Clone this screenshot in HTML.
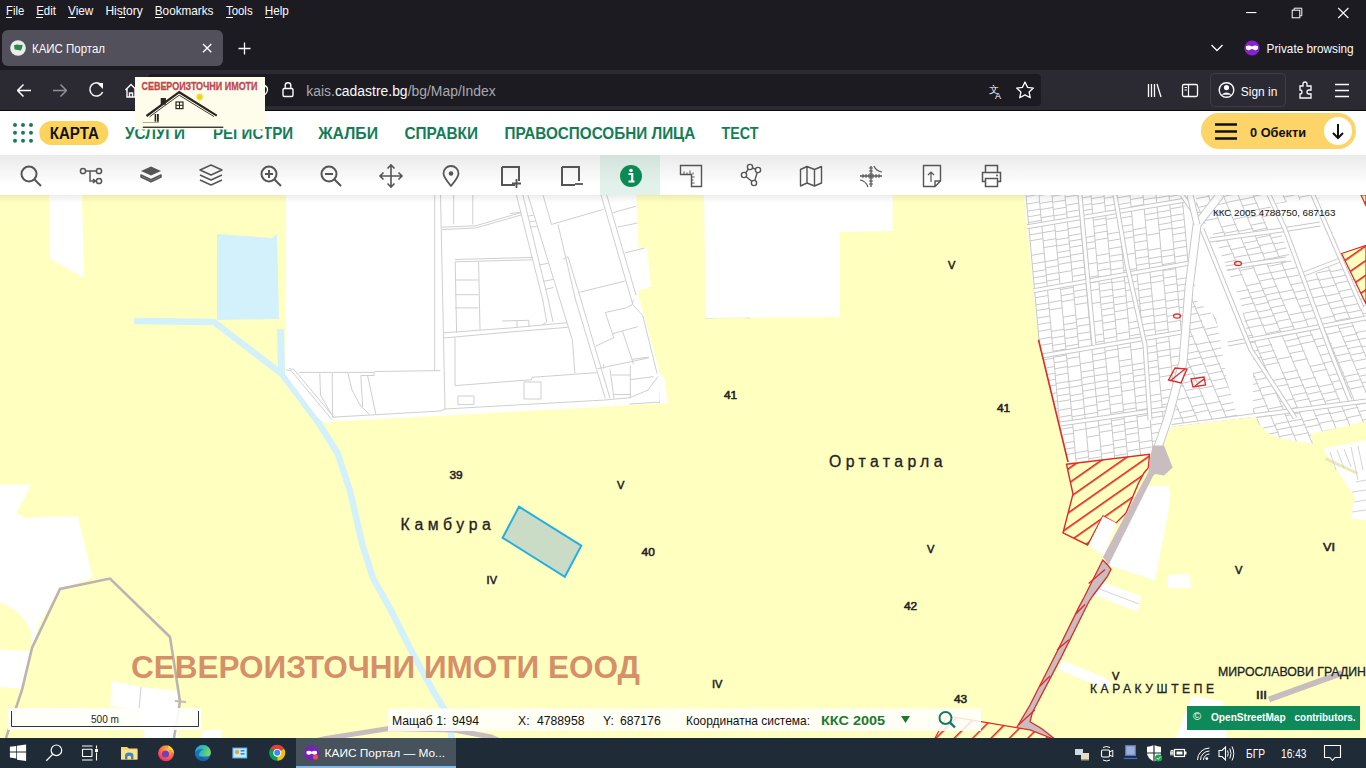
<!DOCTYPE html>
<html><head><meta charset="utf-8">
<style>
*{margin:0;padding:0}
html,body{width:1366px;height:768px;overflow:hidden;background:#fff}
svg{display:block;font-family:"Liberation Sans",sans-serif}
</style></head><body>
<svg width="1366" height="768" viewBox="0 0 1366 768" font-family="Liberation Sans, sans-serif">
<rect x="0" y="0" width="1366" height="70" fill="#1c1b22"/>
<text x="6.1" y="15.4" font-size="12.8" font-weight="normal" fill="#fbfbfe" textLength="18.1" lengthAdjust="spacingAndGlyphs" >File</text>
<text x="36.2" y="15.4" font-size="12.8" font-weight="normal" fill="#fbfbfe" textLength="19.8" lengthAdjust="spacingAndGlyphs" >Edit</text>
<text x="68" y="15.4" font-size="12.8" font-weight="normal" fill="#fbfbfe" textLength="25.3" lengthAdjust="spacingAndGlyphs" >View</text>
<text x="105.4" y="15.4" font-size="12.8" font-weight="normal" fill="#fbfbfe" textLength="37.4" lengthAdjust="spacingAndGlyphs" >History</text>
<text x="154.8" y="15.4" font-size="12.8" font-weight="normal" fill="#fbfbfe" textLength="58.7" lengthAdjust="spacingAndGlyphs" >Bookmarks</text>
<text x="226" y="15.4" font-size="12.8" font-weight="normal" fill="#fbfbfe" textLength="26.6" lengthAdjust="spacingAndGlyphs" >Tools</text>
<text x="264.7" y="15.4" font-size="12.8" font-weight="normal" fill="#fbfbfe" textLength="24.1" lengthAdjust="spacingAndGlyphs" >Help</text>
<rect x="6" y="17" width="6" height="1" fill="#fbfbfe"/>
<rect x="36" y="17" width="7" height="1" fill="#fbfbfe"/>
<rect x="68" y="17" width="8" height="1" fill="#fbfbfe"/>
<rect x="119" y="17" width="6" height="1" fill="#fbfbfe"/>
<rect x="155" y="17" width="8" height="1" fill="#fbfbfe"/>
<rect x="226" y="17" width="7" height="1" fill="#fbfbfe"/>
<rect x="265" y="17" width="8" height="1" fill="#fbfbfe"/>
<rect x="1246" y="12" width="10.4" height="1.1" fill="#fbfbfe"/>
<rect x="1292.2" y="10.2" width="7.6" height="7.6" fill="none" stroke="#fbfbfe" stroke-width="1"/>
<path d="M1294.2 10.2 V8.2 H1301.8 V15.8 H1299.8" fill="none" stroke="#fbfbfe" stroke-width="1"/>
<path d="M1338.2 8 L1348.4 18 M1348.4 8 L1338.2 18" stroke="#fbfbfe" stroke-width="1.1"/>
<rect x="2" y="30" width="221" height="36" rx="6" fill="#52515b"/>
<circle cx="18" cy="48" r="7.8" fill="#ececec"/>
<path d="M14 45.2 L17 44.6 L20 45 L22.6 44.8 L22.2 47.6 L21 50.4 L17.5 50 L14.6 49.5 Z" fill="#2c8a48"/>
<text x="32" y="52.7" font-size="12.3" font-weight="normal" fill="#fbfbfe" textLength="73" lengthAdjust="spacingAndGlyphs" >КАИС Портал</text>
<path d="M203 43.9 L211.3 52.2 M211.3 43.9 L203 52.2" stroke="#fbfbfe" stroke-width="1.4"/>
<path d="M244.5 42.5 V54.5 M238.5 48.5 H250.5" stroke="#fbfbfe" stroke-width="1.3"/>
<path d="M1211.5 45 L1217 50.5 L1222.5 45" fill="none" stroke="#fbfbfe" stroke-width="1.3"/>
<circle cx="1252" cy="48" r="7.6" fill="#8a1fd0"/>
<path d="M1246 46.2 Q1249 44.6 1252 46.6 Q1255 44.6 1258 46.2 Q1258.6 50.4 1255.2 50.2 Q1253 49.6 1252 48.8 Q1251 49.6 1248.8 50.2 Q1245.4 50.4 1246 46.2Z" fill="#fff"/>
<text x="1266.6" y="52.8" font-size="12.3" font-weight="normal" fill="#fbfbfe" textLength="87" lengthAdjust="spacingAndGlyphs" >Private browsing</text>
<rect x="0" y="70" width="1366" height="40" fill="#2b2a33"/>
<rect x="0" y="110" width="1366" height="1" fill="#0c0c0d"/>
<rect x="148" y="74" width="893" height="32" rx="4" fill="#1c1b22"/>
<path d="M17 90.5 H31 M17.5 90.5 L23.5 84.5 M17.5 90.5 L23.5 96.5" fill="none" stroke="#fbfbfe" stroke-width="1.5"/>
<path d="M53 90.5 H67 M66.5 90.5 L60.5 84.5 M66.5 90.5 L60.5 96.5" fill="none" stroke="#8f8f9d" stroke-width="1.5"/>
<path d="M101.6 85.2 A6.6 6.6 0 1 0 102.6 92" fill="none" stroke="#fbfbfe" stroke-width="1.5"/>
<path d="M96.8 83 L103 83 L103 89 Z" fill="#fbfbfe"/>
<path d="M125.5 90 L131 84.5 L136.5 90 M127 89 V97 H135 V89 M129.5 97 V93 H132.5 V97" fill="none" stroke="#fbfbfe" stroke-width="1.4"/>
<rect x="283" y="88.5" width="10" height="8" rx="1.5" fill="none" stroke="#fbfbfe" stroke-width="1.4"/>
<path d="M285.2 88.5 V85.5 A2.8 2.8 0 0 1 290.8 85.5 V88.5" fill="none" stroke="#fbfbfe" stroke-width="1.4"/>
<text x="306.3" y="96.2" font-size="14" fill="#a9a9b0" textLength="189.5" lengthAdjust="spacingAndGlyphs">kais.<tspan fill="#fbfbfe">cadastre.bg</tspan>/bg/Map/Index</text>
<text x="988.5" y="93" font-size="10" font-weight="normal" fill="#fbfbfe" >文</text>
<text x="995" y="98.5" font-size="9" font-weight="normal" fill="#fbfbfe" >A</text>
<path d="M1025 82 L1027.6 87.4 L1033.4 88.1 L1029.1 92 L1030.3 97.8 L1025 94.9 L1019.7 97.8 L1020.9 92 L1016.6 88.1 L1022.4 87.4 Z" fill="none" stroke="#fbfbfe" stroke-width="1.3" stroke-linejoin="round"/>
<path d="M1148.5 84 V97 M1151.5 84 V97 M1154.5 84 V97 M1157 84 L1161 97" fill="none" stroke="#fbfbfe" stroke-width="1.3"/>
<rect x="1182.5" y="84.5" width="15" height="12" rx="1.5" fill="none" stroke="#fbfbfe" stroke-width="1.3"/><path d="M1188.5 84.5 V96.5 M1184.5 87.5 H1187 M1184.5 90 H1187" stroke="#fbfbfe" stroke-width="1.2"/>
<rect x="1210.5" y="73.5" width="75" height="33" rx="4" fill="none" stroke="#3f3e48" stroke-width="1"/>
<circle cx="1226.5" cy="90" r="7.3" fill="none" stroke="#fbfbfe" stroke-width="1.4"/><circle cx="1226.5" cy="87.6" r="2.6" fill="#fbfbfe"/><path d="M1221.5 94.8 Q1226.5 90 1231.5 94.8" fill="#fbfbfe"/>
<text x="1240.8" y="95.7" font-size="13.6" font-weight="normal" fill="#fbfbfe" textLength="36.6" lengthAdjust="spacingAndGlyphs" >Sign in</text>
<path d="M1300 86 H1303 V84 A2 2 0 0 1 1307 84 V86 H1311 V90 H1309 A2 2 0 0 0 1309 94 H1311 V98 H1300 V94 A2 2 0 0 0 1300 90 Z" fill="none" stroke="#fbfbfe" stroke-width="1.3"/>
<path d="M1335 84.5 H1349 M1335 90.5 H1349 M1335 96.5 H1349" stroke="#fbfbfe" stroke-width="1.4"/>
<rect x="0" y="111" width="1366" height="44" fill="#fff"/>
<circle cx="15" cy="125" r="2" fill="#1f7a5a"/>
<circle cx="15" cy="132.8" r="2" fill="#1f7a5a"/>
<circle cx="15" cy="140.7" r="2" fill="#1f7a5a"/>
<circle cx="23" cy="125" r="2" fill="#1f7a5a"/>
<circle cx="23" cy="132.8" r="2" fill="#1f7a5a"/>
<circle cx="23" cy="140.7" r="2" fill="#1f7a5a"/>
<circle cx="31" cy="125" r="2" fill="#1f7a5a"/>
<circle cx="31" cy="132.8" r="2" fill="#1f7a5a"/>
<circle cx="31" cy="140.7" r="2" fill="#1f7a5a"/>
<rect x="39.3" y="121" width="69" height="24" rx="12" fill="#fbd35d"/>
<text x="49.7" y="138.8" font-size="15.8" font-weight="bold" fill="#111" textLength="49.2" lengthAdjust="spacingAndGlyphs" >КАРТА</text>
<text x="125" y="139.2" font-size="16.4" font-weight="bold" fill="#137d57" textLength="60" lengthAdjust="spacingAndGlyphs" >УСЛУГИ</text>
<text x="213" y="139.2" font-size="16.4" font-weight="bold" fill="#137d57" textLength="80" lengthAdjust="spacingAndGlyphs" >РЕГИСТРИ</text>
<text x="318.3" y="139.2" font-size="16.4" font-weight="bold" fill="#137d57" textLength="59.7" lengthAdjust="spacingAndGlyphs" >ЖАЛБИ</text>
<text x="404.4" y="139.2" font-size="16.4" font-weight="bold" fill="#137d57" textLength="73.6" lengthAdjust="spacingAndGlyphs" >СПРАВКИ</text>
<text x="504.5" y="139.2" font-size="16.4" font-weight="bold" fill="#137d57" textLength="190.8" lengthAdjust="spacingAndGlyphs" >ПРАВОСПОСОБНИ ЛИЦА</text>
<text x="721.6" y="139.2" font-size="16.4" font-weight="bold" fill="#137d57" textLength="36.9" lengthAdjust="spacingAndGlyphs" >ТЕСТ</text>
<rect x="1201" y="113" width="155" height="36" rx="18" fill="#fcd467"/>
<path d="M1215 124.5 H1237 M1215 131.5 H1237 M1215 138.5 H1237" stroke="#111" stroke-width="2.4"/>
<text x="1250" y="137" font-size="13" font-weight="bold" fill="#111" textLength="56" lengthAdjust="spacingAndGlyphs" >0 Обекти</text>
<circle cx="1338" cy="131" r="14" fill="#fff"/>
<path d="M1338 124 V138 M1333 133 L1338 138 L1343 133" fill="none" stroke="#111" stroke-width="2"/>
<defs><linearGradient id="tbg" x1="0" y1="0" x2="0" y2="1"><stop offset="0" stop-color="#eaeaea"/><stop offset="0.75" stop-color="#ffffff"/></linearGradient><linearGradient id="tbg2" x1="0" y1="0" x2="0" y2="1"><stop offset="0" stop-color="#d3e3dc"/><stop offset="0.75" stop-color="#e3f1eb"/></linearGradient></defs>
<rect x="0" y="155" width="1366" height="40" fill="url(#tbg)"/>
<rect x="600" y="155" width="60" height="40" fill="url(#tbg2)"/>
<circle cx="29" cy="174" r="7.5" fill="none" stroke="#555" stroke-width="2"/><path d="M34.5 179.5 L41 186" fill="none" stroke="#555" stroke-width="2"/>
<circle cx="83" cy="171" r="2.6" fill="none" stroke="#555" stroke-width="1.5"/><circle cx="99" cy="171" r="2.6" fill="none" stroke="#555" stroke-width="1.5"/><circle cx="99" cy="181" r="2.6" fill="none" stroke="#555" stroke-width="1.5"/>
<path d="M85.6 171 H96.4 M90 171 V181 H95 M93 179 L95.5 181 L93 183" fill="none" stroke="#555" stroke-width="1.5"/>
<path d="M141 171 L151 166.5 L161 171 L151 175.5 Z" fill="#555"/><path d="M141.5 176 L151 180.5 L160.5 176" fill="none" stroke="#555" stroke-width="1.5"/><path d="M143.5 173.5 L141 175 L151 179.5" fill="none" stroke="#555" stroke-width="0"/>
<path d="M141 175 L151 179.7 L161 175 L161 177 L151 181.7 L141 177Z" fill="#fff" stroke="#555" stroke-width="1.5" stroke-linejoin="round"/>
<path d="M200 170 L211 165 L222 170 L211 175 Z M200 175 L211 180 L222 175 M200 180 L211 185 L222 180" fill="none" stroke="#555" stroke-width="1.5" stroke-linejoin="round"/>
<circle cx="269" cy="174" r="7.5" fill="none" stroke="#555" stroke-width="2"/><path d="M274.5 179.5 L281 186 M265 174 H273 M269 170 V178" fill="none" stroke="#555" stroke-width="2"/>
<circle cx="329" cy="174" r="7.5" fill="none" stroke="#555" stroke-width="2"/><path d="M334.5 179.5 L341 186 M325 174 H333" fill="none" stroke="#555" stroke-width="2"/>
<path d="M391 165 V187 M380 176 H402 M387.5 168.5 L391 165 L394.5 168.5 M387.5 183.5 L391 187 L394.5 183.5 M383.5 172.5 L380 176 L383.5 179.5 M398.5 172.5 L402 176 L398.5 179.5" fill="none" stroke="#555" stroke-width="1.6"/>
<path d="M451 186 C446 180 443.5 176.5 443.5 173.5 A7.5 7.5 0 0 1 458.5 173.5 C458.5 176.5 456 180 451 186Z" fill="none" stroke="#555" stroke-width="1.8" stroke-linejoin="round"/><circle cx="451" cy="173.5" r="2.3" fill="#555"/>
<path d="M502 167 H519 V181 M502 167 V185 H515" fill="none" stroke="#555" stroke-width="2"/><path d="M516.5 179 V188 M512 183.5 H521" stroke="#555" stroke-width="1.8"/>
<path d="M562 167 H579 V181 M562 167 V185 H575" fill="none" stroke="#555" stroke-width="2"/><path d="M575 184 H583" stroke="#555" stroke-width="1.8"/>
<circle cx="631" cy="176" r="11" fill="#0c8a55"/><circle cx="631" cy="170.5" r="1.8" fill="#fff"/><path d="M628.5 174 H632.2 V181.5 M628.5 181.5 H634.5" fill="none" stroke="#fff" stroke-width="2.2"/>
<path d="M680.5 165.5 H701.5 V186.5 H691.5 V174.5 H680.5 Z" fill="none" stroke="#555" stroke-width="1.4"/>
<path d="M684 174.5 V171.5 M687 174.5 V172.5 M690 174.5 V170.5 M693 174.5 V172.5 M691.5 177 H694.5 M691.5 180 H693.5 M691.5 183 H694.5" stroke="#555" stroke-width="1"/>
<path d="M744 175 L750 167 L758 170 L754 183 Z" fill="none" stroke="#555" stroke-width="1.4"/>
<circle cx="744" cy="175" r="2.6" fill="#fff" stroke="#555" stroke-width="1.4"/>
<circle cx="750" cy="167" r="2.6" fill="#fff" stroke="#555" stroke-width="1.4"/>
<circle cx="758" cy="170" r="2.6" fill="#fff" stroke="#555" stroke-width="1.4"/>
<circle cx="754" cy="183" r="2.6" fill="#fff" stroke="#555" stroke-width="1.4"/>
<path d="M800.5 169.5 L807 166.5 L814.5 169.5 L821.5 166.5 V183 L814.5 186 L807 183 L800.5 186 Z M807 166.5 V183 M814.5 169.5 V186" fill="none" stroke="#555" stroke-width="1.4" stroke-linejoin="round"/>
<path d="M860 176 H882 M871 166 V187" stroke="#555" stroke-width="1.3"/>
<path d="M863 174 V178 M869 168 H873" stroke="#555" stroke-width="1"/>
<path d="M866 174 V178 M869 171 H873" stroke="#555" stroke-width="1"/>
<path d="M869 174 V178 M869 174 H873" stroke="#555" stroke-width="1"/>
<path d="M873 174 V178 M869 178 H873" stroke="#555" stroke-width="1"/>
<path d="M876 174 V178 M869 181 H873" stroke="#555" stroke-width="1"/>
<path d="M879 174 V178 M869 184 H873" stroke="#555" stroke-width="1"/>
<path d="M874 166 Q876 171 882 172 M868 187 Q866 181 860 180" fill="none" stroke="#555" stroke-width="1.2"/>
<path d="M923.5 165.5 H940.5 V181 L935 186.5 H923.5 Z M940.5 181 H935 V186.5" fill="none" stroke="#555" stroke-width="1.4" stroke-linejoin="round"/><path d="M931 182 V172 M928 175 L931 172 L934 175" fill="none" stroke="#555" stroke-width="1.2"/>
<path d="M985.5 172 V165.5 H997.5 V172 M985.5 181.5 H982.5 V172.5 H1000.5 V181.5 H997.5" fill="none" stroke="#555" stroke-width="1.5"/><rect x="985.5" y="178.5" width="12" height="8" fill="none" stroke="#555" stroke-width="1.5"/><circle cx="997" cy="175.5" r="1" fill="#555"/>
<defs><clipPath id="mc"><rect x="0" y="195" width="1366" height="543"/></clipPath><pattern id="hatch" patternUnits="userSpaceOnUse" width="13" height="13" patternTransform="rotate(45)"><rect width="13" height="13" fill="#ffffc0"/><rect x="0" y="0" width="1.6" height="13" fill="#dd2a2a"/></pattern><pattern id="hatchB" patternUnits="userSpaceOnUse" width="12" height="12" patternTransform="rotate(55)"><rect width="12" height="12" fill="#ffffc0"/><rect x="0" y="0" width="1.7" height="12" fill="#dd2a2a"/></pattern><pattern id="hatch2" patternUnits="userSpaceOnUse" width="16" height="16" patternTransform="rotate(50)"><rect width="16" height="16" fill="#ffffc0"/><rect x="0" y="0" width="1.5" height="16" fill="#e0504a"/></pattern></defs>
<g clip-path="url(#mc)">
<rect x="0" y="195" width="1366" height="543" fill="#ffffc0"/>
<polygon points="49,195 82,195 84,278 50,259" fill="#fff" stroke="none" stroke-width="1" />
<polygon points="217,234 272,238 277,234 279,319 217,320" fill="#d3f1fb" stroke="none" stroke-width="1" />
<polyline points="134,321 214,322 282,374 316.7,420 337.5,453 350,490.8 362.5,545 373,578 391.7,611.7 412.5,653 433,690.8 445.8,711.7 450,728 452,740" fill="none" stroke="#d3f1fb" stroke-width="6.5" stroke-linejoin="round"/>
<polyline points="300,745 324.4,738.6 389,728.6 453.8,730 491,737 500,741" fill="none" stroke="#c8bcbf" stroke-width="5" />
<polygon points="202,731 222,729 222,738 202,738" fill="#fff" stroke="none" stroke-width="1" />
<polygon points="277,329 284,329 285,372 278,372" fill="#d3f1fb" stroke="none" stroke-width="1" />
<polygon points="0,484.4 31.4,484.4 16.5,513.4 25.4,518 49.4,516.4 77.8,516.4 92.8,577.8 59.9,589 40,622 33,646.6 31,632 25,620 15,610 0,602" fill="#fff" stroke="none" stroke-width="1" />
<polygon points="0,649.6 30,651 21,688.6 0,687" fill="#fff" stroke="none" stroke-width="1" />
<polygon points="112,681 141,687 178,691 178,738 145,738 139,710 110,706" fill="#fff" stroke="none" stroke-width="1" />
<polyline points="141,687 139,710" fill="none" stroke="#cfcfcf" stroke-width="1" />
<polyline points="6,738 22,690 32,648 60,589 110,578.6 170,637 180,701.6 174,738" fill="none" stroke="#bcb3b2" stroke-width="2.6" />
<polyline points="175,701 186,702" fill="none" stroke="#c2b9b8" stroke-width="2" />
<polygon points="286,195 636.4,195 638.5,247.5 647,247.5 650.8,286.4 637.3,291 668.5,403.3 333.5,421.6 326,424 318,418 285,374 285,369" fill="#fff" stroke="none" stroke-width="1" />
<polyline points="298.7,372.4 374,372.4 375,371.5 440.4,370.6" fill="none" stroke="#cfcfcf" stroke-width="1" />
<polyline points="286.2,370 291,370.5 332,419.7" fill="none" stroke="#cfcfcf" stroke-width="1" />
<polyline points="289,368.5 294,369.5 334.5,418" fill="none" stroke="#cfcfcf" stroke-width="1" />
<polyline points="332.2,417.2 440.4,411 445,409 605,400 630,397.7 648,390 658,376.6" fill="none" stroke="#cfcfcf" stroke-width="1" />
<polyline points="629.5,404 667.8,401.6" fill="none" stroke="#cfcfcf" stroke-width="1" />
<polyline points="660.8,375.8 660,403" fill="none" stroke="#cfcfcf" stroke-width="1" />
<polyline points="319.8,373.5 320.5,395 331,413.5" fill="none" stroke="#cfcfcf" stroke-width="1" />
<polyline points="332.2,373 332.5,417" fill="none" stroke="#cfcfcf" stroke-width="1" />
<polyline points="347.8,373 352,390 360,405 369.5,414.7" fill="none" stroke="#cfcfcf" stroke-width="1" />
<polyline points="360.8,375.5 374,375.5 374,372.4" fill="none" stroke="#cfcfcf" stroke-width="1" />
<polyline points="360.8,375.5 362.7,407" fill="none" stroke="#cfcfcf" stroke-width="1" />
<polyline points="367.7,376 375.8,414" fill="none" stroke="#cfcfcf" stroke-width="1" />
<polyline points="434.7,195 434.7,371" fill="none" stroke="#cfcfcf" stroke-width="1" />
<polyline points="440.5,195 445,409" fill="none" stroke="#cfcfcf" stroke-width="1" />
<polyline points="453.7,195 453.7,224.3" fill="none" stroke="#cfcfcf" stroke-width="1" />
<polyline points="472.8,195 472.8,224.3" fill="none" stroke="#cfcfcf" stroke-width="1" />
<polyline points="442,227.2 475.7,225.8 521,212.6" fill="none" stroke="#cfcfcf" stroke-width="1" />
<polyline points="442,229.6 475.7,228 521,215" fill="none" stroke="#cfcfcf" stroke-width="1" />
<polyline points="510,213.6 521.5,212.2" fill="none" stroke="#cfcfcf" stroke-width="1" />
<polyline points="455,259.5 532.9,257.4" fill="none" stroke="#cfcfcf" stroke-width="1" />
<polyline points="455,261.8 532.9,259.8" fill="none" stroke="#cfcfcf" stroke-width="1" />
<polyline points="455.2,261.8 456.6,332.8" fill="none" stroke="#cfcfcf" stroke-width="1" />
<polyline points="478.6,261.8 480,329.9" fill="none" stroke="#cfcfcf" stroke-width="1" />
<polyline points="455,280 478.6,280" fill="none" stroke="#cfcfcf" stroke-width="1" />
<polyline points="455,294.7 478.6,294.7" fill="none" stroke="#cfcfcf" stroke-width="1" />
<polyline points="455,307.9 478.6,307.9" fill="none" stroke="#cfcfcf" stroke-width="1" />
<polyline points="443.5,332.8 510,328 567,322.7" fill="none" stroke="#cfcfcf" stroke-width="1" />
<polyline points="443.5,338 510,332 567.8,327.3" fill="none" stroke="#cfcfcf" stroke-width="1" />
<polyline points="502,321 528.75,320.3 529,327" fill="none" stroke="#cfcfcf" stroke-width="1" />
<polyline points="517,321 517,328" fill="none" stroke="#cfcfcf" stroke-width="1" />
<polyline points="455,337.2 455,385.6 532,379.7" fill="none" stroke="#cfcfcf" stroke-width="1" />
<polyline points="531.4,379.7 532,377.3 596.7,372.7" fill="none" stroke="#cfcfcf" stroke-width="1" />
<polyline points="524,382 541,382 541,399 524,399 524,382" fill="none" stroke="#cfcfcf" stroke-width="1" />
<polyline points="458,396 474,396 474,404.6 458,404.6 458,396" fill="none" stroke="#cfcfcf" stroke-width="1" />
<polyline points="516.4,195 542.8,300 546.7,321.9 542,325" fill="none" stroke="#cfcfcf" stroke-width="1" />
<polyline points="522.9,195 548.3,300 553,321.9" fill="none" stroke="#cfcfcf" stroke-width="1" />
<polyline points="527.9,195 560,300 572.5,340.6 574.8,373.4" fill="none" stroke="#cfcfcf" stroke-width="1" />
<polyline points="543,195 551.5,224.4 603.8,209.3" fill="none" stroke="#cfcfcf" stroke-width="1" />
<polyline points="558,224.4 575.6,300 605.3,398.4" fill="none" stroke="#cfcfcf" stroke-width="1" />
<polyline points="563,259.5 568,256.6 581,300 610,398.4" fill="none" stroke="#cfcfcf" stroke-width="1" />
<polyline points="578.8,292.4 625.3,281" fill="none" stroke="#cfcfcf" stroke-width="1" />
<polyline points="528.5,216 533.5,215.3" fill="none" stroke="#cfcfcf" stroke-width="1" />
<polyline points="530,221.7 535.8,221" fill="none" stroke="#cfcfcf" stroke-width="1" />
<polyline points="531,227 536.5,226.6" fill="none" stroke="#cfcfcf" stroke-width="1" />
<polyline points="539.4,265 548,263.3" fill="none" stroke="#cfcfcf" stroke-width="1" />
<polyline points="543,281.5 553,279.4" fill="none" stroke="#cfcfcf" stroke-width="1" />
<polyline points="545,289.5 553.7,287.4" fill="none" stroke="#cfcfcf" stroke-width="1" />
<polyline points="601,195 633,305 642.8,315.6 652,353 657,373.4" fill="none" stroke="#cfcfcf" stroke-width="1" />
<polyline points="606.7,195 636,295" fill="none" stroke="#cfcfcf" stroke-width="1" />
<polyline points="612.4,212.9 636,206.2" fill="none" stroke="#cfcfcf" stroke-width="1" />
<polyline points="617.4,227.2 637.5,223" fill="none" stroke="#cfcfcf" stroke-width="1" />
<polyline points="624.6,253 644.7,248" fill="none" stroke="#cfcfcf" stroke-width="1" />
<polyline points="605.3,312.5 626.4,307.8 632,304.7 633.4,300" fill="none" stroke="#cfcfcf" stroke-width="1" />
<polyline points="605.3,312.5 614,338.3" fill="none" stroke="#cfcfcf" stroke-width="1" />
<polyline points="596,346 614,337.5" fill="none" stroke="#cfcfcf" stroke-width="1" />
<polyline points="613,333.6 638,326.6" fill="none" stroke="#cfcfcf" stroke-width="1" />
<polyline points="622.5,331 633.4,364" fill="none" stroke="#cfcfcf" stroke-width="1" />
<polyline points="597.5,368.75 649,357.8" fill="none" stroke="#cfcfcf" stroke-width="1" />
<polyline points="603.75,368.75 603.75,364" fill="none" stroke="#cfcfcf" stroke-width="1" />
<polyline points="610,369.5 614,398.4" fill="none" stroke="#cfcfcf" stroke-width="1" />
<polyline points="611.6,375 630.3,375" fill="none" stroke="#cfcfcf" stroke-width="1" />
<polyline points="630.3,365.6 630.3,398.4" fill="none" stroke="#cfcfcf" stroke-width="1" />
<polyline points="630.3,379.7 653.75,376.6" fill="none" stroke="#cfcfcf" stroke-width="1" />
<polyline points="613,394.5 630.3,394.5" fill="none" stroke="#cfcfcf" stroke-width="1" />
<polyline points="632,359.4 649,357" fill="none" stroke="#cfcfcf" stroke-width="1" />
<polyline points="706,318 740,317 750,318" fill="none" stroke="#cfcfcf" stroke-width="1" />
<polygon points="704,195 892.6,195 892.6,231 840,232 840,317 706,318" fill="#fff" stroke="none" stroke-width="1" />
<polygon points="660,375 664,375 668,403 660,403" fill="#fff" stroke="none" stroke-width="1" />
<defs><clipPath id="uc"><polygon points="1024,195 1366,195 1366,421.6 1310.6,434 1313,444 1283,439 1268.6,434 1258.7,424 1256,416.7 1172,426.5 1153.6,458.7 1068,462 1038.5,339.8"/></clipPath><clipPath id="ucl"><polygon points="1020,195 1190,195 1196,225 1190,306 1183,373 1168,425 1153,459 1068,462 1038,340"/></clipPath><clipPath id="ucr"><polygon points="1196,195 1366,195 1366,421.6 1310.6,434 1313,444 1283,439 1268.6,434 1258.7,424 1256,416.7 1172,426.5 1183,373 1190,306 1196,225"/></clipPath></defs>
<polygon points="1024,195 1366,195 1366,421.6 1310.6,434 1313,444 1283,439 1268.6,434 1258.7,424 1256,416.7 1172,426.5 1153.6,458.7 1068,462 1038.5,339.8" fill="#fff" stroke="none" stroke-width="1" />
<g clip-path="url(#ucl)"><path d="M1026.0 195.0L1050.8 470.0M1039.0 195.0L1063.8 470.0M1052.0 195.0L1076.8 470.0M1065.0 195.0L1089.8 470.0M1078.0 195.0L1102.8 470.0M1091.0 195.0L1115.8 470.0M1104.0 195.0L1128.8 470.0M1117.0 195.0L1141.8 470.0M1130.0 195.0L1154.8 470.0M1143.0 195.0L1167.8 470.0M1156.0 195.0L1180.8 470.0M1169.0 195.0L1193.8 470.0M1182.0 195.0L1206.8 470.0M1026.1 196.6L1039.1 194.4M1026.8 204.1L1039.8 201.9M1027.5 211.2L1040.5 209.0M1028.0 216.9L1041.0 214.6M1028.5 222.5L1041.5 220.3M1029.0 228.2L1042.0 226.0M1029.6 234.9L1042.6 232.7M1030.1 240.8L1043.1 238.6M1031.4 255.4L1044.4 253.2M1032.2 263.9L1045.2 261.7M1032.9 271.9L1045.9 269.7M1033.5 277.9L1046.5 275.7M1034.0 284.3L1047.0 282.1M1034.6 290.3L1047.6 288.1M1035.2 297.8L1048.2 295.5M1035.9 304.9L1048.9 302.7M1036.4 310.6L1049.4 308.4M1037.1 318.1L1050.1 315.9M1037.7 324.6L1050.7 322.4M1038.3 331.4L1051.3 329.2M1039.0 339.3L1052.0 337.1M1039.5 345.5L1052.5 343.3M1040.9 360.3L1053.9 358.1M1041.6 368.7L1054.6 366.5M1042.2 375.5L1055.2 373.3M1042.8 381.5L1055.8 379.2M1043.3 387.1L1056.3 384.9M1044.0 394.9L1057.0 392.7M1044.7 403.0L1057.7 400.8M1045.4 410.6L1058.4 408.4M1046.1 417.8L1059.1 415.6M1047.4 432.8L1060.4 430.5M1047.9 438.4L1060.9 436.2M1049.3 453.8L1062.3 451.6M1049.9 460.5L1062.9 458.3M1050.4 466.1L1063.4 463.9M1039.1 195.6L1052.1 193.4M1039.8 203.4L1052.8 201.2M1040.3 209.6L1053.3 207.4M1041.0 217.7L1054.0 215.5M1041.7 224.6L1054.7 222.4M1042.4 232.7L1055.4 230.5M1043.1 240.8L1056.1 238.6M1043.7 247.6L1056.7 245.4M1045.0 261.7L1058.0 259.5M1045.6 267.9L1058.6 265.7M1046.2 274.8L1059.2 272.6M1046.8 281.1L1059.8 278.9M1047.4 287.9L1060.4 285.7M1048.7 302.7L1061.7 300.4M1049.4 310.0L1062.4 307.8M1051.3 331.4L1064.3 329.2M1051.9 338.1L1064.9 335.9M1052.5 345.5L1065.5 343.3M1053.1 351.2L1066.1 349.0M1053.6 357.2L1066.6 355.0M1054.1 362.8L1067.1 360.6M1054.6 368.8L1067.6 366.6M1055.2 375.4L1068.2 373.2M1056.0 383.5L1069.0 381.3M1056.5 389.5L1069.5 387.3M1057.1 396.0L1070.1 393.8M1057.6 401.9L1070.6 399.7M1058.4 410.4L1071.4 408.1M1059.0 417.3L1072.0 415.1M1059.5 423.1L1072.5 420.9M1060.1 429.4L1073.1 427.2M1060.6 435.4L1073.6 433.2M1061.4 443.7L1074.4 441.5M1061.9 449.7L1074.9 447.5M1062.4 455.3L1075.4 453.1M1052.1 196.3L1065.1 194.1M1052.7 202.3L1065.7 200.1M1053.3 209.4L1066.3 207.2M1053.9 215.9L1066.9 213.7M1055.3 231.9L1068.3 229.7M1056.0 239.8L1069.0 237.6M1056.6 246.0L1069.6 243.8M1057.2 252.6L1070.2 250.4M1057.7 258.2L1070.7 256.0M1058.3 264.4L1071.3 262.2M1059.0 272.8L1072.0 270.6M1060.5 289.5L1073.5 287.3M1061.1 295.7L1074.1 293.4M1061.6 301.7L1074.6 299.5M1063.0 317.1L1076.0 314.9M1063.7 324.6L1076.7 322.4M1064.2 330.4L1077.2 328.1M1064.9 338.6L1077.9 336.4M1065.6 346.3L1078.6 344.1M1066.2 352.4L1079.2 350.2M1066.7 358.9L1079.7 356.7M1067.5 367.3L1080.5 365.1M1068.8 381.7L1081.8 379.4M1069.3 387.5L1082.3 385.3M1070.1 395.8L1083.1 393.5M1070.6 401.7L1083.6 399.5M1071.4 410.1L1084.4 407.9M1072.0 416.7L1085.0 414.5M1072.5 422.6L1085.5 420.4M1073.2 431.0L1086.2 428.8M1075.2 452.9L1088.2 450.6M1075.8 459.1L1088.8 456.9M1076.3 465.3L1089.3 463.1M1065.2 197.1L1078.2 194.9M1065.9 205.3L1078.9 203.1M1066.5 212.2L1079.5 210.0M1067.3 220.4L1080.3 218.2M1068.0 228.7L1081.0 226.5M1068.7 235.8L1081.7 233.6M1069.2 241.3L1082.2 239.1M1069.7 247.4L1082.7 245.2M1070.4 255.3L1083.4 253.1M1071.0 262.2L1084.0 260.0M1071.7 269.4L1084.7 267.1M1072.3 276.4L1085.3 274.2M1073.0 284.3L1086.0 282.1M1073.7 291.4L1086.7 289.2M1074.2 297.8L1087.2 295.6M1074.9 304.8L1087.9 302.6M1076.2 319.4L1089.2 317.2M1076.8 326.4L1089.8 324.2M1077.5 334.0L1090.5 331.8M1078.1 341.1L1091.1 338.9M1078.9 349.4L1091.9 347.2M1080.2 363.8L1093.2 361.6M1080.9 372.2L1093.9 370.0M1081.5 378.1L1094.5 375.9M1082.1 384.9L1095.1 382.7M1082.7 391.1L1095.7 388.9M1083.3 398.6L1096.3 396.4M1084.1 406.8L1097.1 404.6M1084.8 414.5L1097.8 412.3M1086.0 428.8L1099.0 426.6M1086.8 437.2L1099.8 435.0M1088.1 452.1L1101.1 449.9M1088.8 458.9L1101.8 456.7M1089.3 465.4L1102.3 463.2M1078.3 198.6L1091.3 196.4M1079.0 205.8L1092.0 203.6M1079.5 211.3L1092.5 209.1M1080.1 218.7L1093.1 216.5M1081.9 238.1L1094.9 235.9M1082.4 243.7L1095.4 241.5M1083.0 250.0L1096.0 247.8M1084.3 264.7L1097.3 262.5M1085.5 277.9L1098.5 275.7M1086.0 283.7L1099.0 281.4M1086.7 291.2L1099.7 289.0M1087.8 304.3L1100.8 302.1M1089.5 322.7L1102.5 320.4M1090.7 336.1L1103.7 333.9M1091.3 343.2L1104.3 341.0M1091.9 349.0L1104.9 346.8M1092.4 354.7L1105.4 352.5M1092.9 361.1L1105.9 358.9M1093.6 368.9L1106.6 366.7M1094.3 375.9L1107.3 373.7M1094.9 382.4L1107.9 380.2M1095.4 388.7L1108.4 386.5M1096.1 396.4L1109.1 394.2M1096.7 402.4L1109.7 400.2M1097.4 410.8L1110.4 408.5M1098.1 418.7L1111.1 416.5M1098.8 425.7L1111.8 423.5M1099.4 432.4L1112.4 430.2M1100.6 446.5L1113.6 444.3M1101.3 454.1L1114.3 451.9M1101.9 460.8L1114.9 458.6M1102.4 466.5L1115.4 464.3M1091.3 198.7L1104.3 196.5M1091.9 204.7L1104.9 202.5M1093.3 220.2L1106.3 218.0M1093.8 226.5L1106.8 224.2M1094.5 233.3L1107.5 231.1M1095.1 240.2L1108.1 238.0M1096.5 255.7L1109.5 253.5M1097.2 264.1L1110.2 261.9M1097.8 270.7L1110.8 268.5M1098.4 277.3L1111.4 275.1M1099.0 284.3L1112.0 282.1M1099.7 291.3L1112.7 289.1M1100.2 297.6L1113.2 295.4M1100.8 304.3L1113.8 302.1M1101.3 309.9L1114.3 307.7M1101.9 316.1L1114.9 313.9M1102.5 323.2L1115.5 321.0M1103.2 330.6L1116.2 328.4M1103.9 338.8L1116.9 336.6M1105.1 351.2L1118.1 349.0M1105.7 358.6L1118.7 356.4M1107.1 374.0L1120.1 371.8M1107.8 382.0L1120.8 379.8M1108.5 389.0L1121.5 386.8M1109.2 397.0L1122.2 394.8M1109.9 405.0L1122.9 402.8M1110.6 413.2L1123.6 411.0M1111.3 420.8L1124.3 418.6M1111.8 426.4L1124.8 424.2M1112.4 433.0L1125.4 430.7M1113.1 441.0L1126.1 438.8M1113.8 448.3L1126.8 446.1M1114.5 455.9L1127.5 453.7M1115.0 461.4L1128.0 459.2M1115.7 469.1L1128.7 466.9M1104.3 198.3L1117.3 196.1M1105.0 206.0L1118.0 203.8M1105.5 211.7L1118.5 209.5M1106.2 219.4L1119.2 217.2M1107.5 234.1L1120.5 231.9M1108.1 241.1L1121.1 238.8M1108.8 248.9L1121.8 246.6M1109.5 256.3L1122.5 254.1M1110.1 262.2L1123.1 260.0M1110.7 270.0L1123.7 267.7M1111.4 277.2L1124.4 275.0M1111.9 282.8L1124.9 280.6M1112.6 290.4L1125.6 288.1M1113.3 297.9L1126.3 295.7M1113.9 304.9L1126.9 302.7M1114.5 311.8L1127.5 309.6M1115.3 320.0L1128.3 317.8M1116.5 334.0L1129.5 331.8M1117.8 348.8L1130.8 346.6M1118.9 361.1L1131.9 358.9M1119.5 367.0L1132.5 364.8M1120.2 375.4L1133.2 373.1M1120.9 383.3L1133.9 381.1M1121.7 391.5L1134.7 389.3M1122.9 404.6L1135.9 402.4M1123.4 410.1L1136.4 407.9M1124.0 417.0L1137.0 414.8M1124.5 422.9L1137.5 420.7M1125.1 429.4L1138.1 427.2M1125.6 434.9L1138.6 432.7M1126.3 442.9L1139.3 440.7M1127.1 451.2L1140.1 449.0M1127.8 459.4L1140.8 457.2M1128.4 466.0L1141.4 463.8M1117.3 197.9L1130.3 195.7M1117.9 204.7L1130.9 202.5M1118.4 210.4L1131.4 208.2M1119.1 218.4L1132.1 216.2M1119.9 226.7L1132.9 224.5M1120.4 233.0L1133.4 230.8M1121.0 239.1L1134.0 236.8M1122.4 255.4L1135.4 253.1M1123.8 270.7L1136.8 268.5M1124.3 276.4L1137.3 274.2M1124.9 283.2L1137.9 281.0M1125.6 290.7L1138.6 288.5M1126.6 302.2L1139.6 300.0M1127.2 308.7L1140.2 306.5M1128.5 322.7L1141.5 320.5M1129.1 329.1L1142.1 326.9M1129.7 335.8L1142.7 333.6M1130.2 341.8L1143.2 339.6M1131.0 350.0L1144.0 347.8M1132.3 364.7L1145.3 362.5M1132.8 370.6L1145.8 368.4M1133.3 376.4L1146.3 374.2M1133.8 382.1L1146.8 379.9M1134.4 388.4L1147.4 386.2M1135.1 396.6L1148.1 394.4M1135.7 403.3L1148.7 401.1M1136.4 410.4L1149.4 408.2M1137.0 416.9L1150.0 414.7M1138.1 429.1L1151.1 426.9M1139.3 442.6L1152.3 440.4M1139.9 448.9L1152.9 446.7M1141.7 469.3L1154.7 467.1M1130.4 199.5L1143.4 197.3M1131.1 206.7L1144.1 204.5M1133.1 229.8L1146.1 227.6M1133.7 235.6L1146.7 233.4M1134.3 242.7L1147.3 240.5M1135.0 251.0L1148.0 248.8M1135.7 258.5L1148.7 256.3M1136.3 265.3L1149.3 263.1M1136.8 271.0L1149.8 268.7M1138.1 284.6L1151.1 282.4M1138.6 290.5L1151.6 288.3M1139.3 297.9L1152.3 295.7M1139.8 303.7L1152.8 301.5M1140.4 310.8L1153.4 308.6M1141.0 317.5L1154.0 315.3M1141.7 324.8L1154.7 322.6M1142.3 331.2L1155.3 329.0M1143.0 339.5L1156.0 337.3M1143.7 347.7L1156.7 345.5M1144.3 353.9L1157.3 351.7M1145.1 362.3L1158.1 360.1M1145.6 368.7L1158.6 366.5M1146.3 375.7L1159.3 373.5M1146.9 382.5L1159.9 380.2M1148.1 396.1L1161.1 393.9M1148.7 402.7L1161.7 400.4M1149.4 410.2L1162.4 408.0M1150.1 418.1L1163.1 415.9M1150.7 425.1L1163.7 422.9M1151.5 433.5L1164.5 431.3M1152.2 441.5L1165.2 439.3M1152.7 447.6L1165.7 445.4M1153.9 461.0L1166.9 458.8M1154.5 467.2L1167.5 465.0M1143.4 199.7L1156.4 197.5M1144.0 206.4L1157.0 204.2M1144.8 214.8L1157.8 212.6M1145.3 220.5L1158.3 218.3M1146.6 235.3L1159.6 233.1M1148.0 250.3L1161.0 248.1M1148.7 258.6L1161.7 256.4M1149.2 264.2L1162.2 262.0M1149.8 270.9L1162.8 268.6M1150.4 277.3L1163.4 275.1M1150.9 282.9L1163.9 280.6M1152.6 301.4L1165.6 299.2M1153.3 309.4L1166.3 307.2M1153.9 316.2L1166.9 314.0M1154.5 323.1L1167.5 320.9M1155.3 331.3L1168.3 329.1M1156.4 343.5L1169.4 341.3M1157.1 351.5L1170.1 349.3M1157.6 357.1L1170.6 354.9M1158.7 369.0L1171.7 366.8M1159.4 377.2L1172.4 375.0M1160.6 390.9L1173.6 388.7M1161.3 398.6L1174.3 396.3M1161.9 404.9L1174.9 402.7M1163.8 425.6L1176.8 423.4M1165.1 440.9L1178.1 438.7M1165.7 447.2L1178.7 445.0M1166.9 460.2L1179.9 458.0M1167.6 467.9L1180.6 465.7M1156.3 198.0L1169.3 195.8M1156.9 204.5L1169.9 202.3M1157.6 212.3L1170.6 210.1M1158.1 218.4L1171.1 216.2M1158.7 224.7L1171.7 222.5M1159.2 230.3L1172.2 228.1M1161.1 251.2L1174.1 249.0M1161.6 257.0L1174.6 254.8M1162.3 264.6L1175.3 262.4M1162.8 270.8L1175.8 268.6M1163.5 278.2L1176.5 276.0M1164.2 285.9L1177.2 283.7M1164.9 293.4L1177.9 291.2M1165.6 301.4L1178.6 299.2M1166.2 308.6L1179.2 306.4M1166.9 316.4L1179.9 314.1M1167.5 322.6L1180.5 320.4M1168.7 335.8L1181.7 333.6M1169.9 349.5L1182.9 347.3M1170.6 357.4L1183.6 355.2M1171.4 365.9L1184.4 363.7M1172.0 372.8L1185.0 370.6M1173.2 386.5L1186.2 384.3M1173.8 392.3L1186.8 390.1M1174.5 400.7L1187.5 398.5M1175.3 409.0L1188.3 406.8M1176.0 417.1L1189.0 414.9M1176.6 423.4L1189.6 421.2M1177.3 431.8L1190.3 429.5M1178.0 439.0L1191.0 436.8M1178.5 445.2L1191.5 443.0M1179.1 451.1L1192.1 448.9M1179.6 457.4L1192.6 455.2M1180.3 464.8L1193.3 462.6M1169.1 196.6L1182.1 194.4M1169.7 202.7L1182.7 200.5M1170.2 208.8L1183.2 206.6M1170.9 215.9L1183.9 213.7M1171.4 221.8L1184.4 219.5M1172.1 228.9L1185.1 226.7M1172.6 234.7L1185.6 232.5M1173.3 242.3L1186.3 240.1M1173.8 248.6L1186.8 246.4M1174.6 257.0L1187.6 254.8M1175.2 264.2L1188.2 262.0M1176.6 279.4L1189.6 277.2M1177.1 285.5L1190.1 283.3M1177.7 291.6L1190.7 289.4M1178.4 299.8L1191.4 297.6M1179.1 307.8L1192.1 305.6M1179.9 315.9L1192.9 313.7M1180.4 321.9L1193.4 319.7M1181.1 329.1L1194.1 326.9M1181.8 337.3L1194.8 335.1M1182.5 344.7L1195.5 342.5M1183.1 351.7L1196.1 349.5M1183.7 358.0L1196.7 355.8M1184.4 366.3L1197.4 364.1M1185.0 373.3L1198.0 371.1M1185.8 381.7L1198.8 379.5M1187.1 396.0L1200.1 393.8M1188.9 415.7L1201.9 413.5M1189.4 421.6L1202.4 419.4M1190.0 427.8L1203.0 425.6M1190.7 435.9L1203.7 433.6M1191.2 441.9L1204.2 439.7M1191.8 448.6L1204.8 446.4M1192.4 455.3L1205.4 453.0M1193.0 461.5L1206.0 459.3M1193.7 469.7L1206.7 467.5" stroke="#c9c9c9" stroke-width="1" fill="none"/></g>
<g clip-path="url(#ucr)"><path d="M1058.0 195.0L1169.3 460.0M1073.0 195.0L1184.3 460.0M1088.0 195.0L1199.3 460.0M1103.0 195.0L1214.3 460.0M1118.0 195.0L1229.3 460.0M1133.0 195.0L1244.3 460.0M1148.0 195.0L1259.3 460.0M1163.0 195.0L1274.3 460.0M1178.0 195.0L1289.3 460.0M1193.0 195.0L1304.3 460.0M1208.0 195.0L1319.3 460.0M1223.0 195.0L1334.3 460.0M1238.0 195.0L1349.3 460.0M1253.0 195.0L1364.3 460.0M1268.0 195.0L1379.3 460.0M1283.0 195.0L1394.3 460.0M1298.0 195.0L1409.3 460.0M1313.0 195.0L1424.3 460.0M1328.0 195.0L1439.3 460.0M1343.0 195.0L1454.3 460.0M1358.0 195.0L1469.3 460.0M1373.0 195.0L1484.3 460.0M1388.0 195.0L1499.3 460.0M1403.0 195.0L1514.3 460.0M1418.0 195.0L1529.3 460.0M1059.6 198.8L1074.6 195.8M1063.0 206.8L1078.0 203.8M1066.0 214.1L1081.0 211.1M1069.1 221.5L1084.1 218.5M1072.0 228.2L1087.0 225.2M1074.8 235.0L1089.8 232.0M1077.7 241.9L1092.7 238.9M1080.0 247.4L1095.0 244.4M1082.9 254.4L1097.9 251.4M1086.2 262.2L1101.2 259.2M1089.1 269.1L1104.1 266.1M1092.0 276.0L1107.0 273.0M1094.5 281.9L1109.5 278.9M1096.9 287.6L1111.9 284.6M1099.9 294.7L1114.9 291.7M1103.0 302.1L1118.0 299.1M1106.2 309.8L1121.2 306.8M1109.2 316.8L1124.2 313.8M1112.1 323.8L1127.1 320.8M1115.6 332.2L1130.6 329.2M1122.2 348.0L1137.2 345.0M1131.2 369.3L1146.2 366.3M1136.9 382.8L1151.9 379.8M1140.1 390.6L1155.1 387.6M1143.6 398.8L1158.6 395.8M1146.9 406.7L1161.9 403.7M1152.4 419.9L1167.4 416.9M1155.4 426.9L1170.4 423.9M1157.7 432.5L1172.7 429.5M1165.9 452.0L1180.9 449.0M1168.4 457.9L1183.4 454.9M1171.5 465.3L1186.5 462.3M1074.2 197.8L1089.2 194.8M1077.6 205.9L1092.6 202.9M1081.1 214.4L1096.1 211.4M1084.0 221.1L1099.0 218.1M1089.6 234.6L1104.6 231.6M1092.9 242.4L1107.9 239.4M1095.4 248.4L1110.4 245.4M1097.8 254.1L1112.8 251.1M1100.4 260.3L1115.4 257.3M1104.0 268.8L1119.0 265.8M1107.1 276.3L1122.1 273.3M1109.5 281.8L1124.5 278.8M1112.0 287.7L1127.0 284.7M1114.8 294.5L1129.8 291.5M1118.2 302.7L1133.2 299.7M1120.8 308.9L1135.8 305.9M1123.2 314.5L1138.2 311.5M1125.9 321.0L1140.9 318.0M1128.7 327.6L1143.7 324.6M1131.7 334.9L1146.7 331.9M1134.3 341.0L1149.3 338.0M1137.2 347.9L1152.2 344.9M1140.7 356.2L1155.7 353.2M1143.2 362.2L1158.2 359.2M1149.6 377.4L1164.6 374.4M1152.3 383.7L1167.3 380.7M1155.4 391.1L1170.4 388.1M1158.1 397.7L1173.1 394.7M1164.2 412.2L1179.2 409.2M1167.7 420.4L1182.7 417.4M1170.7 427.5L1185.7 424.5M1173.3 433.7L1188.3 430.7M1176.6 441.6L1191.6 438.6M1182.1 454.7L1197.1 451.7M1185.1 462.0L1200.1 459.0M1188.3 469.4L1203.3 466.4M1088.6 196.5L1103.6 193.5M1094.3 210.0L1109.3 207.0M1096.6 215.6L1111.6 212.6M1099.9 223.3L1114.9 220.3M1103.1 231.0L1118.1 228.0M1105.7 237.2L1120.7 234.2M1108.3 243.4L1123.3 240.4M1111.1 249.9L1126.1 246.9M1114.2 257.5L1129.2 254.5M1117.5 265.1L1132.5 262.1M1120.5 272.3L1135.5 269.3M1123.8 280.1L1138.8 277.1M1126.4 286.4L1141.4 283.4M1129.9 294.8L1144.9 291.8M1133.4 303.0L1148.4 300.0M1136.0 309.3L1151.0 306.3M1142.5 324.7L1157.5 321.7M1145.9 332.9L1160.9 329.9M1151.6 346.5L1166.6 343.5M1157.7 360.9L1172.7 357.9M1163.7 375.3L1178.7 372.3M1166.8 382.5L1181.8 379.5M1169.3 388.6L1184.3 385.6M1174.2 400.3L1189.2 397.3M1179.4 412.7L1194.4 409.7M1181.8 418.2L1196.8 415.2M1184.9 425.8L1199.9 422.8M1188.1 433.4L1203.1 430.4M1190.5 439.1L1205.5 436.1M1193.3 445.7L1208.3 442.7M1103.4 196.0L1118.4 193.0M1105.8 201.6L1120.8 198.6M1109.1 209.6L1124.1 206.6M1112.5 217.5L1127.5 214.5M1115.1 223.9L1130.1 220.9M1117.6 229.7L1132.6 226.7M1120.1 235.8L1135.1 232.8M1123.0 242.6L1138.0 239.6M1125.6 248.9L1140.6 245.9M1128.8 256.5L1143.8 253.5M1137.6 277.3L1152.6 274.3M1140.4 284.1L1155.4 281.1M1143.7 291.9L1158.7 288.9M1146.9 299.5L1161.9 296.5M1151.9 311.4L1166.9 308.4M1154.4 317.4L1169.4 314.4M1157.0 323.5L1172.0 320.5M1160.5 332.0L1175.5 329.0M1163.5 338.9L1178.5 335.9M1166.8 346.8L1181.8 343.8M1169.7 353.8L1184.7 350.8M1173.1 361.8L1188.1 358.8M1176.6 370.1L1191.6 367.1M1179.1 376.3L1194.1 373.3M1182.1 383.3L1197.1 380.3M1185.2 390.7L1200.2 387.7M1188.5 398.6L1203.5 395.6M1191.8 406.4L1206.8 403.4M1194.6 413.0L1209.6 410.0M1202.1 431.0L1217.1 428.0M1207.7 444.3L1222.7 441.3M1211.1 452.5L1226.1 449.5M1214.0 459.3L1229.0 456.3M1217.3 467.1L1232.3 464.1M1118.7 196.7L1133.7 193.7M1121.2 202.7L1136.2 199.7M1124.4 210.2L1139.4 207.2M1126.9 216.2L1141.9 213.2M1130.2 224.0L1145.2 221.0M1132.7 229.9L1147.7 226.9M1136.1 238.1L1151.1 235.1M1138.6 244.1L1153.6 241.1M1141.8 251.7L1156.8 248.7M1144.3 257.7L1159.3 254.7M1147.0 263.9L1162.0 260.9M1149.9 271.0L1164.9 268.0M1152.6 277.5L1167.6 274.5M1156.2 285.9L1171.2 282.9M1161.1 297.5L1176.1 294.5M1164.6 306.0L1179.6 303.0M1167.8 313.7L1182.8 310.7M1170.4 319.8L1185.4 316.8M1172.8 325.6L1187.8 322.6M1175.6 332.3L1190.6 329.3M1178.5 339.0L1193.5 336.0M1181.6 346.5L1196.6 343.5M1184.8 353.9L1199.8 350.9M1187.2 359.9L1202.2 356.9M1190.1 366.6L1205.1 363.6M1193.5 374.8L1208.5 371.8M1196.5 382.0L1211.5 379.0M1199.4 388.8L1214.4 385.8M1205.9 404.3L1220.9 401.3M1209.3 412.3L1224.3 409.3M1212.4 419.8L1227.4 416.8M1215.1 426.2L1230.1 423.2M1217.5 432.0L1232.5 429.0M1220.8 439.8L1235.8 436.8M1223.9 447.2L1238.9 444.2M1226.8 454.0L1241.8 451.0M1229.9 461.4L1244.9 458.4M1134.4 198.3L1149.4 195.3M1137.2 204.9L1152.2 201.9M1140.7 213.4L1155.7 210.4M1143.7 220.5L1158.7 217.5M1150.0 235.4L1165.0 232.4M1153.0 242.6L1168.0 239.6M1156.2 250.3L1171.2 247.3M1159.3 257.7L1174.3 254.7M1162.3 264.8L1177.3 261.8M1165.8 273.1L1180.8 270.1M1169.0 280.7L1184.0 277.7M1172.2 288.4L1187.2 285.4M1175.8 296.9L1190.8 293.9M1178.2 302.6L1193.2 299.6M1181.0 309.3L1196.0 306.3M1183.8 316.0L1198.8 313.0M1187.0 323.6L1202.0 320.6M1189.7 329.9L1204.7 326.9M1195.9 344.7L1210.9 341.7M1199.2 352.6L1214.2 349.6M1201.8 358.8L1216.8 355.8M1205.1 366.6L1220.1 363.6M1208.2 374.0L1223.2 371.0M1211.2 381.2L1226.2 378.2M1214.7 389.6L1229.7 386.6M1217.8 397.0L1232.8 394.0M1221.2 404.9L1236.2 401.9M1223.9 411.3L1238.9 408.3M1226.3 417.2L1241.3 414.2M1231.7 430.1L1246.7 427.1M1234.4 436.3L1249.4 433.3M1236.9 442.4L1251.9 439.4M1240.1 450.0L1255.1 447.0M1242.7 456.3L1257.7 453.3M1245.6 463.2L1260.6 460.2M1149.4 198.3L1164.4 195.3M1155.2 212.3L1170.2 209.3M1158.7 220.5L1173.7 217.5M1161.2 226.4L1176.2 223.4M1164.3 233.8L1179.3 230.8M1169.8 246.8L1184.8 243.8M1172.2 252.6L1187.2 249.6M1174.8 258.8L1189.8 255.8M1177.5 265.3L1192.5 262.3M1181.0 273.6L1196.0 270.6M1186.6 286.9L1201.6 283.9M1193.0 302.2L1208.0 299.2M1195.6 308.3L1210.6 305.3M1198.6 315.4L1213.6 312.4M1204.5 329.4L1219.5 326.4M1207.1 335.6L1222.1 332.6M1210.0 342.6L1225.0 339.6M1212.9 349.5L1227.9 346.5M1215.8 356.5L1230.8 353.5M1221.1 369.1L1236.1 366.1M1224.0 376.0L1239.0 373.0M1227.2 383.5L1242.2 380.5M1230.0 390.1L1245.0 387.1M1233.5 398.5L1248.5 395.5M1236.6 405.9L1251.6 402.9M1238.9 411.5L1253.9 408.5M1247.8 432.6L1262.8 429.6M1251.2 440.8L1266.2 437.8M1254.4 448.4L1269.4 445.4M1259.9 461.5L1274.9 458.5M1262.9 468.6L1277.9 465.6M1163.9 197.2L1178.9 194.2M1166.9 204.3L1181.9 201.3M1169.6 210.7L1184.6 207.7M1172.4 217.4L1187.4 214.4M1175.1 223.7L1190.1 220.7M1178.6 232.2L1193.6 229.2M1181.9 240.0L1196.9 237.0M1184.6 246.5L1199.6 243.5M1187.7 253.8L1202.7 250.8M1191.0 261.6L1206.0 258.6M1197.2 276.4L1212.2 273.4M1199.9 282.8L1214.9 279.8M1205.5 296.2L1220.5 293.2M1211.9 311.4L1226.9 308.4M1215.0 318.8L1230.0 315.8M1218.1 326.1L1233.1 323.1M1220.6 332.2L1235.6 329.2M1223.5 339.1L1238.5 336.1M1226.0 344.9L1241.0 341.9M1228.3 350.5L1243.3 347.5M1231.8 358.7L1246.8 355.7M1234.5 365.4L1249.5 362.4M1237.9 373.2L1252.9 370.2M1240.5 379.5L1255.5 376.5M1243.3 386.3L1258.3 383.3M1246.2 393.0L1261.2 390.0M1249.7 401.3L1264.7 398.3M1252.7 408.6L1267.7 405.6M1255.2 414.4L1270.2 411.4M1261.1 428.5L1276.1 425.5M1263.9 435.1L1278.9 432.1M1270.3 450.4L1285.3 447.4M1272.7 456.2L1287.7 453.2M1275.3 462.3L1290.3 459.3M1277.6 467.9L1292.6 464.9M1183.1 207.3L1198.1 204.3M1186.4 214.9L1201.4 211.9M1189.6 222.6L1204.6 219.6M1192.0 228.3L1207.0 225.3M1198.4 243.6L1213.4 240.6M1201.5 251.0L1216.5 248.0M1210.2 271.8L1225.2 268.8M1212.6 277.3L1227.6 274.3M1215.9 285.3L1230.9 282.3M1218.6 291.7L1233.6 288.7M1224.1 304.7L1239.1 301.7M1226.8 311.3L1241.8 308.3M1229.7 318.1L1244.7 315.1M1232.2 324.0L1247.2 321.0M1235.0 330.6L1250.0 327.6M1238.1 338.0L1253.1 335.0M1240.9 344.7L1255.9 341.7M1244.4 353.0L1259.4 350.0M1247.4 360.2L1262.4 357.2M1253.0 373.5L1268.0 370.5M1255.7 380.0L1270.7 377.0M1259.2 388.4L1274.2 385.4M1262.3 395.7L1277.3 392.7M1267.9 409.1L1282.9 406.1M1274.3 424.4L1289.3 421.4M1276.6 429.9L1291.6 426.9M1279.5 436.6L1294.5 433.6M1285.2 450.2L1300.2 447.2M1291.5 465.4L1306.5 462.4M1194.7 199.0L1209.7 196.0M1198.2 207.3L1213.2 204.3M1200.6 213.0L1215.6 210.0M1203.9 220.9L1218.9 217.9M1209.7 234.9L1224.7 231.9M1212.9 242.4L1227.9 239.4M1215.5 248.5L1230.5 245.5M1218.7 256.3L1233.7 253.3M1221.6 263.2L1236.6 260.2M1225.0 271.1L1240.0 268.1M1227.6 277.3L1242.6 274.3M1234.0 292.5L1249.0 289.5M1237.0 299.8L1252.0 296.8M1239.6 305.9L1254.6 302.9M1242.8 313.5L1257.8 310.5M1245.8 320.7L1260.8 317.7M1248.7 327.7L1263.7 324.7M1253.9 340.0L1268.9 337.0M1257.0 347.4L1272.0 344.4M1259.5 353.4L1274.5 350.4M1262.3 359.9L1277.3 356.9M1264.6 365.4L1279.6 362.4M1271.1 380.9L1286.1 377.9M1273.7 387.2L1288.7 384.2M1279.8 401.7L1294.8 398.7M1283.4 410.1L1298.4 407.1M1285.7 415.7L1300.7 412.7M1288.3 421.8L1303.3 418.8M1290.6 427.4L1305.6 424.4M1294.0 435.6L1309.0 432.6M1299.9 449.6L1314.9 446.6M1302.7 456.3L1317.7 453.3M1306.3 464.7L1321.3 461.7M1212.5 205.7L1227.5 202.7M1215.4 212.6L1230.4 209.6M1221.5 227.1L1236.5 224.1M1224.1 233.4L1239.1 230.4M1230.9 249.6L1245.9 246.6M1234.2 257.5L1249.2 254.5M1239.7 270.6L1254.7 267.6M1246.2 285.9L1261.2 282.9M1249.2 293.1L1264.2 290.1M1251.7 299.0L1266.7 296.0M1254.3 305.2L1269.3 302.2M1257.2 312.2L1272.2 309.2M1259.8 318.4L1274.8 315.4M1263.0 325.9L1278.0 322.9M1266.2 333.6L1281.2 330.6M1277.0 359.4L1292.0 356.4M1282.8 373.2L1297.8 370.2M1285.7 380.0L1300.7 377.0M1289.1 388.0L1304.1 385.0M1292.2 395.4L1307.2 392.4M1294.8 401.6L1309.8 398.6M1298.0 409.2L1313.0 406.2M1303.1 421.4L1318.1 418.4M1305.6 427.4L1320.6 424.4M1309.0 435.4L1324.0 432.4M1311.5 441.4L1326.5 438.4M1322.2 466.9L1337.2 463.9M1223.6 196.4L1238.6 193.4M1226.2 202.5L1241.2 199.5M1233.2 219.3L1248.2 216.3M1238.3 231.3L1253.3 228.3M1243.3 243.3L1258.3 240.3M1246.0 249.8L1261.0 246.8M1248.3 255.3L1263.3 252.3M1251.3 262.4L1266.3 259.4M1256.7 275.3L1271.7 272.3M1259.2 281.2L1274.2 278.2M1262.5 289.0L1277.5 286.0M1265.1 295.1L1280.1 292.1M1267.5 300.9L1282.5 297.9M1270.4 307.9L1285.4 304.9M1273.0 314.0L1288.0 311.0M1276.2 321.6L1291.2 318.6M1279.2 328.9L1294.2 325.9M1281.6 334.6L1296.6 331.6M1284.4 341.3L1299.4 338.3M1286.8 347.0L1301.8 344.0M1289.6 353.5L1304.6 350.5M1293.0 361.6L1308.0 358.6M1300.8 380.3L1315.8 377.3M1304.2 388.3L1319.2 385.3M1306.7 394.3L1321.7 391.3M1309.8 401.6L1324.8 398.6M1312.7 408.7L1327.7 405.7M1315.7 415.7L1330.7 412.7M1318.9 423.4L1333.9 420.4M1322.3 431.5L1337.3 428.5M1325.5 439.1L1340.5 436.1M1328.8 446.8L1343.8 443.8M1335.1 461.9L1350.1 458.9M1338.1 469.0L1353.1 466.0M1240.0 199.8L1255.0 196.8M1242.6 205.9L1257.6 202.9M1245.2 212.1L1260.2 209.1M1247.5 217.7L1262.5 214.7M1250.7 225.3L1265.7 222.3M1253.1 230.9L1268.1 227.9M1256.1 238.1L1271.1 235.1M1259.3 245.7L1274.3 242.7M1262.7 253.8L1277.7 250.8M1265.1 259.5L1280.1 256.5M1268.0 266.4L1283.0 263.4M1270.7 272.8L1285.7 269.8M1273.5 279.5L1288.5 276.5M1279.0 292.7L1294.0 289.7M1282.3 300.5L1297.3 297.5M1288.4 315.1L1303.4 312.1M1291.8 323.1L1306.8 320.1M1297.9 337.6L1312.9 334.6M1300.5 343.9L1315.5 340.9M1310.0 366.5L1325.0 363.5M1312.4 372.2L1327.4 369.2M1318.6 386.8L1333.6 383.8M1321.7 394.2L1336.7 391.2M1324.6 401.3L1339.6 398.3M1327.5 408.1L1342.5 405.1M1329.8 413.7L1344.8 410.7M1333.4 422.1L1348.4 419.1M1336.9 430.4L1351.9 427.4M1343.6 446.5L1358.6 443.5M1346.7 453.9L1361.7 450.9M1349.9 461.4L1364.9 458.4M1253.5 196.3L1268.5 193.3M1259.1 209.4L1274.1 206.4M1262.2 216.9L1277.2 213.9M1268.2 231.2L1283.2 228.2M1271.1 238.1L1286.1 235.1M1273.6 244.0L1288.6 241.0M1276.1 249.9L1291.1 246.9M1278.9 256.6L1293.9 253.6M1281.5 262.9L1296.5 259.9M1284.5 270.0L1299.5 267.0M1287.6 277.3L1302.6 274.3M1290.7 284.8L1305.7 281.8M1293.9 292.4L1308.9 289.4M1296.9 299.6L1311.9 296.6M1299.8 306.5L1314.8 303.5M1302.4 312.7L1317.4 309.7M1305.4 319.7L1320.4 316.7M1308.4 327.0L1323.4 324.0M1313.8 339.8L1328.8 336.8M1316.7 346.7L1331.7 343.7M1320.3 355.2L1335.3 352.2M1323.6 363.0L1338.6 360.0M1328.8 375.5L1343.8 372.5M1331.6 382.2L1346.6 379.2M1334.9 389.9L1349.9 386.9M1340.7 403.8L1355.7 400.8M1343.4 410.3L1358.4 407.3M1346.6 417.8L1361.6 414.8M1350.0 425.9L1365.0 422.9M1352.9 432.9L1367.9 429.9M1356.2 440.7L1371.2 437.7M1359.1 447.6L1374.1 444.6M1367.1 466.6L1382.1 463.6M1272.1 204.7L1287.1 201.7M1278.4 219.9L1293.4 216.9M1281.3 226.7L1296.3 223.7M1284.5 234.4L1299.5 231.4M1287.4 241.1L1302.4 238.1M1290.1 247.7L1305.1 244.7M1293.4 255.6L1308.4 252.6M1296.4 262.6L1311.4 259.6M1298.9 268.6L1313.9 265.6M1301.4 274.6L1316.4 271.6M1304.5 281.8L1319.5 278.8M1307.9 290.1L1322.9 287.1M1311.3 298.1L1326.3 295.1M1314.8 306.5L1329.8 303.5M1320.0 318.8L1335.0 315.8M1323.0 326.0L1338.0 323.0M1326.5 334.3L1341.5 331.3M1332.4 348.4L1347.4 345.4M1335.6 356.0L1350.6 353.0M1338.4 362.6L1353.4 359.6M1344.3 376.6L1359.3 373.6M1346.7 382.4L1361.7 379.4M1349.5 389.1L1364.5 386.1M1356.1 404.8L1371.1 401.8M1359.0 411.6L1374.0 408.6M1362.5 420.1L1377.5 417.1M1365.5 427.2L1380.5 424.2M1368.0 433.2L1383.0 430.2M1371.6 441.6L1386.6 438.6M1374.5 448.6L1389.5 445.6M1378.0 456.8L1393.0 453.8M1283.9 197.1L1298.9 194.1M1286.6 203.5L1301.6 200.5M1289.5 210.5L1304.5 207.5M1292.0 216.5L1307.0 213.5M1295.1 223.8L1310.1 220.8M1298.7 232.3L1313.7 229.3M1301.0 238.0L1316.0 235.0M1304.3 245.8L1319.3 242.8M1307.5 253.4L1322.5 250.4M1310.2 259.8L1325.2 256.8M1313.3 267.1L1328.3 264.1M1315.8 273.2L1330.8 270.2M1318.8 280.3L1333.8 277.3M1322.0 287.8L1337.0 284.8M1325.5 296.2L1340.5 293.2M1328.3 303.0L1343.3 300.0M1330.9 308.9L1345.9 305.9M1333.3 314.8L1348.3 311.8M1335.8 320.8L1350.8 317.8M1339.2 328.7L1354.2 325.7M1342.5 336.7L1357.5 333.7M1344.8 342.2L1359.8 339.2M1347.5 348.7L1362.5 345.7M1350.3 355.2L1365.3 352.2M1352.9 361.5L1367.9 358.5M1356.4 369.7L1371.4 366.7M1359.1 376.3L1374.1 373.3M1361.9 382.9L1376.9 379.9M1365.4 391.1L1380.4 388.1M1368.9 399.5L1383.9 396.5M1372.0 406.9L1387.0 403.9M1377.7 420.6L1392.7 417.6M1381.2 428.8L1396.2 425.8M1383.9 435.2L1398.9 432.2M1387.4 443.5L1402.4 440.5M1390.9 451.9L1405.9 448.9M1393.7 458.6L1408.7 455.6M1396.3 464.7L1411.3 461.7M1299.0 197.4L1314.0 194.4M1301.6 203.7L1316.6 200.7M1304.4 210.2L1319.4 207.2M1307.9 218.6L1322.9 215.6M1310.9 225.8L1325.9 222.8M1313.9 232.9L1328.9 229.9M1316.7 239.6L1331.7 236.6M1319.2 245.5L1334.2 242.5M1322.0 252.1L1337.0 249.1M1324.5 258.1L1339.5 255.1M1327.1 264.3L1342.1 261.3M1330.3 271.8L1345.3 268.8M1332.8 277.8L1347.8 274.8M1335.2 283.6L1350.2 280.6M1338.6 291.6L1353.6 288.6M1341.4 298.4L1356.4 295.4M1344.8 306.3L1359.8 303.3M1347.5 312.9L1362.5 309.9M1355.8 332.7L1370.8 329.7M1358.7 339.5L1373.7 336.5M1361.9 347.1L1376.9 344.1M1365.3 355.3L1380.3 352.3M1368.1 361.9L1383.1 358.9M1371.2 369.3L1386.2 366.3M1374.6 377.4L1389.6 374.4M1377.6 384.4L1392.6 381.4M1380.2 390.7L1395.2 387.7M1383.0 397.4L1398.0 394.4M1386.0 404.6L1401.0 401.6M1388.8 411.3L1403.8 408.3M1394.1 423.8L1409.1 420.8M1396.5 429.6L1411.5 426.6M1399.3 436.2L1414.3 433.2M1402.0 442.6L1417.0 439.6M1404.7 449.0L1419.7 446.0M1407.1 454.9L1422.1 451.9M1409.8 461.2L1424.8 458.2M1413.3 469.4L1428.3 466.4M1314.8 199.3L1329.8 196.3M1317.5 205.6L1332.5 202.6M1320.6 213.2L1335.6 210.2M1323.4 219.7L1338.4 216.7M1326.5 227.2L1341.5 224.2M1329.1 233.5L1344.1 230.5M1331.9 240.0L1346.9 237.0M1334.4 246.1L1349.4 243.1M1337.9 254.3L1352.9 251.3M1341.1 261.9L1356.1 258.9M1343.5 267.5L1358.5 264.5M1346.0 273.6L1361.0 270.6M1348.8 280.3L1363.8 277.3M1351.5 286.7L1366.5 283.7M1354.1 292.8L1369.1 289.8M1357.1 300.0L1372.1 297.0M1359.7 306.2L1374.7 303.2M1362.9 313.8L1377.9 310.8M1365.2 319.3L1380.2 316.3M1368.5 327.1L1383.5 324.1M1373.9 340.1L1388.9 337.1M1376.5 346.3L1391.5 343.3M1379.9 354.2L1394.9 351.2M1383.3 362.4L1398.3 359.4M1385.7 368.2L1400.7 365.2M1388.5 374.9L1403.5 371.9M1391.9 382.8L1406.9 379.8M1400.3 403.0L1415.3 400.0M1403.7 411.0L1418.7 408.0M1406.6 417.8L1421.6 414.8M1409.8 425.4L1424.8 422.4M1415.2 438.3L1430.2 435.3M1417.6 444.0L1432.6 441.0M1420.9 451.9L1435.9 448.9M1427.0 466.4L1442.0 463.4M1328.1 195.3L1343.1 192.3M1331.0 202.0L1346.0 199.0M1333.7 208.5L1348.7 205.5M1336.9 216.1L1351.9 213.1M1339.5 222.3L1354.5 219.3M1342.4 229.3L1357.4 226.3M1345.9 237.7L1360.9 234.7M1351.1 250.0L1366.1 247.0M1353.8 256.5L1368.8 253.5M1356.8 263.6L1371.8 260.6M1359.3 269.6L1374.3 266.6M1362.4 276.9L1377.4 273.9M1365.7 284.7L1380.7 281.7M1368.1 290.6L1383.1 287.6M1370.9 297.1L1385.9 294.1M1373.3 302.8L1388.3 299.8M1375.8 308.9L1390.8 305.9M1378.7 315.8L1393.7 312.8M1381.4 322.2L1396.4 319.2M1384.2 328.8L1399.2 325.8M1386.6 334.5L1401.6 331.5M1390.2 343.0L1405.2 340.0M1392.6 348.8L1407.6 345.8M1396.1 357.2L1411.1 354.2M1398.6 363.0L1413.6 360.0M1401.4 369.8L1416.4 366.8M1404.4 377.0L1419.4 374.0M1407.9 385.2L1422.9 382.2M1414.1 400.1L1429.1 397.1M1416.7 406.3L1431.7 403.3M1419.1 411.9L1434.1 408.9M1422.5 419.9L1437.5 416.9M1425.0 426.0L1440.0 423.0M1430.9 440.0L1445.9 437.0M1434.3 448.0L1449.3 445.0M1437.0 454.5L1452.0 451.5M1440.3 462.5L1455.3 459.5M1443.1 469.1L1458.1 466.1M1344.7 199.2L1359.7 196.2M1347.1 204.8L1362.1 201.8M1350.2 212.2L1365.2 209.2M1356.9 228.1L1371.9 225.1M1359.8 235.1L1374.8 232.1M1362.5 241.5L1377.5 238.5M1364.9 247.3L1379.9 244.3M1367.5 253.2L1382.5 250.2M1371.0 261.7L1386.0 258.7M1373.4 267.3L1388.4 264.3M1375.9 273.3L1390.9 270.3M1378.2 278.9L1393.2 275.9M1381.6 286.9L1396.6 283.9M1384.5 293.7L1399.5 290.7M1387.6 301.2L1402.6 298.2M1390.4 307.9L1405.4 304.9M1393.3 314.8L1408.3 311.8M1399.2 328.7L1414.2 325.7M1402.0 335.6L1417.0 332.6M1404.8 342.1L1419.8 339.1M1407.2 347.9L1422.2 344.9M1420.2 378.8L1435.2 375.8M1422.6 384.4L1437.6 381.4M1425.6 391.8L1440.6 388.8M1431.6 405.9L1446.6 402.9M1434.3 412.3L1449.3 409.3M1437.7 420.5L1452.7 417.5M1440.2 426.5L1455.2 423.5M1443.1 433.4L1458.1 430.4M1446.3 440.9L1461.3 437.9M1449.3 448.1L1464.3 445.1M1452.3 455.2L1467.3 452.2M1455.1 461.9L1470.1 458.9M1360.9 201.8L1375.9 198.8M1363.8 208.9L1378.8 205.9M1366.8 215.9L1381.8 212.9M1369.4 222.1L1384.4 219.1M1371.8 227.9L1386.8 224.9M1374.9 235.2L1389.9 232.2M1377.7 241.9L1392.7 238.9M1383.6 255.9L1398.6 252.9M1386.8 263.6L1401.8 260.6M1390.4 272.1L1405.4 269.1M1392.8 277.9L1407.8 274.9M1395.6 284.6L1410.6 281.6M1399.1 293.0L1414.1 290.0M1402.4 300.8L1417.4 297.8M1405.7 308.6L1420.7 305.6M1408.3 314.8L1423.3 311.8M1410.7 320.4L1425.7 317.4M1413.2 326.5L1428.2 323.5M1416.4 334.1L1431.4 331.1M1419.9 342.3L1434.9 339.3M1423.3 350.4L1438.3 347.4M1429.3 364.7L1444.3 361.7M1432.0 371.2L1447.0 368.2M1435.2 378.7L1450.2 375.7M1437.6 384.6L1452.6 381.6M1444.1 400.0L1459.1 397.0M1447.2 407.3L1462.2 404.3M1450.2 414.4L1465.2 411.4M1455.8 427.8L1470.8 424.8M1458.3 433.9L1473.3 430.9M1461.7 441.9L1476.7 438.9M1464.2 447.7L1479.2 444.7M1466.6 453.6L1481.6 450.6M1469.1 459.6L1484.1 456.6M1471.8 466.0L1486.8 463.0M1376.3 202.8L1391.3 199.8M1381.9 216.3L1396.9 213.3M1384.4 222.3L1399.4 219.3M1387.9 230.4L1402.9 227.4M1390.2 236.0L1405.2 233.0M1393.6 243.9L1408.6 240.9M1396.4 250.6L1411.4 247.6M1398.9 256.6L1413.9 253.6M1404.8 270.6L1419.8 267.6M1407.5 277.1L1422.5 274.1M1410.9 285.3L1425.9 282.3M1413.3 290.9L1428.3 287.9M1416.0 297.5L1431.0 294.5M1419.1 304.7L1434.1 301.7M1421.8 311.3L1436.8 308.3M1424.9 318.5L1439.9 315.5M1427.2 324.1L1442.2 321.1M1430.8 332.5L1445.8 329.5M1433.3 338.5L1448.3 335.5M1435.9 344.8L1450.9 341.8M1438.9 351.8L1453.9 348.8M1441.9 359.0L1456.9 356.0M1447.7 373.0L1462.7 370.0M1454.3 388.6L1469.3 385.6M1457.4 396.0L1472.4 393.0M1460.1 402.4L1475.1 399.4M1466.7 418.0L1481.7 415.0M1469.9 425.8L1484.9 422.8M1472.9 432.8L1487.9 429.8M1475.6 439.4L1490.6 436.4M1478.5 446.1L1493.5 443.1M1481.2 452.6L1496.2 449.6M1484.8 461.1L1499.8 458.1M1487.5 467.7L1502.5 464.7M1388.7 196.7L1403.7 193.7M1393.9 209.1L1408.9 206.1M1397.0 216.3L1412.0 213.3M1399.5 222.3L1414.5 219.3M1402.2 228.7L1417.2 225.7M1405.4 236.4L1420.4 233.4M1408.9 244.7L1423.9 241.7M1412.4 253.0L1427.4 250.0M1414.8 258.7L1429.8 255.7M1420.6 272.6L1435.6 269.6M1425.8 285.0L1440.8 282.0M1429.3 293.2L1444.3 290.2M1431.9 299.5L1446.9 296.5M1434.4 305.5L1449.4 302.5M1437.6 313.1L1452.6 310.1M1440.4 319.8L1455.4 316.8M1446.6 334.6L1461.6 331.6M1452.9 349.6L1467.9 346.6M1459.0 364.0L1474.0 361.0M1461.5 370.1L1476.5 367.1M1465.0 378.2L1480.0 375.2M1468.4 386.5L1483.4 383.5M1471.1 393.0L1486.1 390.0M1474.3 400.4L1489.3 397.4M1477.4 407.9L1492.4 404.9M1479.8 413.6L1494.8 410.6M1482.2 419.3L1497.2 416.3M1484.9 425.8L1499.9 422.8M1488.0 433.1L1503.0 430.1M1490.9 439.9L1505.9 436.9M1494.4 448.2L1509.4 445.2M1497.9 456.7L1512.9 453.7M1501.0 464.0L1516.0 461.0M1403.2 195.5L1418.2 192.5M1405.7 201.4L1420.7 198.4M1408.1 207.2L1423.1 204.2M1411.0 213.9L1426.0 210.9M1414.0 221.2L1429.0 218.2M1417.1 228.7L1432.1 225.7M1419.9 235.2L1434.9 232.2M1422.5 241.4L1437.5 238.4M1425.8 249.2L1440.8 246.2M1428.5 255.7L1443.5 252.7M1432.0 264.1L1447.0 261.1M1434.7 270.4L1449.7 267.4M1438.2 278.7L1453.2 275.7M1440.5 284.3L1455.5 281.3M1443.6 291.7L1458.6 288.7M1449.0 304.5L1464.0 301.5M1451.4 310.3L1466.4 307.3M1453.9 316.2L1468.9 313.2M1456.8 323.2L1471.8 320.2M1462.1 335.8L1477.1 332.8M1464.7 341.9L1479.7 338.9M1468.2 350.1L1483.2 347.1M1470.5 355.7L1485.5 352.7M1476.1 368.9L1491.1 365.9M1478.8 375.5L1493.8 372.5M1481.7 382.4L1496.7 379.4M1485.1 390.6L1500.1 387.6M1488.4 398.3L1503.4 395.3M1491.5 405.7L1506.5 402.7M1494.9 413.8L1509.9 410.8M1497.9 421.0L1512.9 418.0M1504.5 436.6L1519.5 433.6M1507.1 442.9L1522.1 439.9M1510.0 449.7L1525.0 446.7M1512.5 455.8L1527.5 452.8M1515.7 463.2L1530.7 460.2" stroke="#c9c9c9" stroke-width="1" fill="none"/></g>
<polygon points="1197,224 1209,224 1240,300 1253,360 1253,418 1238,418 1227,381 1216,317 1196,300 1194,269" fill="#fff" stroke="none" stroke-width="1" />
<polygon points="1290,232 1327,225 1340,262 1300,280" fill="#fff" stroke="none" stroke-width="1" />
<polygon points="1270,205 1318,197 1340,252 1292,262" fill="#fff" stroke="none" stroke-width="1" />
<polygon points="1318,195 1366,195 1366,246 1341,254" fill="#fff" stroke="none" stroke-width="1" />
<g clip-path="url(#uc)">
<polyline points="1020,228 1192,199" fill="none" stroke="#c8c8c8" stroke-width="5" stroke-linejoin="round"/>
<polyline points="1020,228 1192,199" fill="none" stroke="#fff" stroke-width="3" stroke-linejoin="round"/>
<polyline points="1026,292 1190,263" fill="none" stroke="#c8c8c8" stroke-width="5" stroke-linejoin="round"/>
<polyline points="1026,292 1190,263" fill="none" stroke="#fff" stroke-width="3" stroke-linejoin="round"/>
<polyline points="1036,357 1188,331" fill="none" stroke="#c8c8c8" stroke-width="5" stroke-linejoin="round"/>
<polyline points="1036,357 1188,331" fill="none" stroke="#fff" stroke-width="3" stroke-linejoin="round"/>
<polyline points="1046,426 1172,408" fill="none" stroke="#c8c8c8" stroke-width="5" stroke-linejoin="round"/>
<polyline points="1046,426 1172,408" fill="none" stroke="#fff" stroke-width="3" stroke-linejoin="round"/>
<polyline points="1210,240 1282,230 1320,224" fill="none" stroke="#c8c8c8" stroke-width="5" stroke-linejoin="round"/>
<polyline points="1210,240 1282,230 1320,224" fill="none" stroke="#fff" stroke-width="3" stroke-linejoin="round"/>
<polyline points="1226,268 1286,259" fill="none" stroke="#c8c8c8" stroke-width="5" stroke-linejoin="round"/>
<polyline points="1226,268 1286,259" fill="none" stroke="#fff" stroke-width="3" stroke-linejoin="round"/>
<polyline points="1299,276 1340,260" fill="none" stroke="#c8c8c8" stroke-width="5" stroke-linejoin="round"/>
<polyline points="1299,276 1340,260" fill="none" stroke="#fff" stroke-width="3" stroke-linejoin="round"/>
<polyline points="1228,344 1366,318" fill="none" stroke="#c8c8c8" stroke-width="5" stroke-linejoin="round"/>
<polyline points="1228,344 1366,318" fill="none" stroke="#fff" stroke-width="3" stroke-linejoin="round"/>
<polyline points="1172,426.5 1366,401" fill="none" stroke="#c8c8c8" stroke-width="5" stroke-linejoin="round"/>
<polyline points="1172,426.5 1366,401" fill="none" stroke="#fff" stroke-width="3" stroke-linejoin="round"/>
<polyline points="1202,229 1251,350 1295,418" fill="none" stroke="#c8c8c8" stroke-width="5" stroke-linejoin="round"/>
<polyline points="1202,229 1251,350 1295,418" fill="none" stroke="#fff" stroke-width="3" stroke-linejoin="round"/>
<polyline points="1269,195 1285,229 1330,350 1350,400" fill="none" stroke="#c8c8c8" stroke-width="5" stroke-linejoin="round"/>
<polyline points="1269,195 1285,229 1330,350 1350,400" fill="none" stroke="#fff" stroke-width="3" stroke-linejoin="round"/>
<polyline points="1313,195 1362,308" fill="none" stroke="#c8c8c8" stroke-width="5" stroke-linejoin="round"/>
<polyline points="1313,195 1362,308" fill="none" stroke="#fff" stroke-width="3" stroke-linejoin="round"/>
<polyline points="1115,195 1127,265 1145,345 1150,420" fill="none" stroke="#c8c8c8" stroke-width="5" stroke-linejoin="round"/>
<polyline points="1115,195 1127,265 1145,345 1150,420" fill="none" stroke="#fff" stroke-width="3" stroke-linejoin="round"/>
<polyline points="1080,195 1086,260 1094,345" fill="none" stroke="#c8c8c8" stroke-width="5" stroke-linejoin="round"/>
<polyline points="1080,195 1086,260 1094,345" fill="none" stroke="#fff" stroke-width="3" stroke-linejoin="round"/>
<polyline points="1182,195 1196,215" fill="none" stroke="#c8c8c8" stroke-width="5" stroke-linejoin="round"/>
<polyline points="1182,195 1196,215" fill="none" stroke="#fff" stroke-width="3" stroke-linejoin="round"/>
</g>
<polyline points="1220,195 1197,224.7 1189,288 1183,362 1168,418 1155,456" fill="none" stroke="#c8c8c8" stroke-width="9" stroke-linejoin="round"/>
<polyline points="1220,195 1197,224.7 1189,288 1183,362 1168,418 1155,456" fill="none" stroke="#fff" stroke-width="7" stroke-linejoin="round"/>
<polyline points="1190,195 1197,224.7" fill="none" stroke="#c8c8c8" stroke-width="7" stroke-linejoin="round"/>
<polyline points="1190,195 1197,224.7" fill="none" stroke="#fff" stroke-width="5" stroke-linejoin="round"/>
<polygon points="1341.6,253.5 1366,245.4 1366,304" fill="url(#hatchB)" stroke="#dd2a2a" stroke-width="1.2" />
<polygon points="1361,195 1366,195 1366,206" fill="url(#hatchB)" stroke="#dd2a2a" stroke-width="1.2" />
<ellipse cx="1238" cy="263.5" rx="3.5" ry="2.2" fill="none" stroke="#dd2a2a" stroke-width="1.2"/>
<ellipse cx="1177" cy="316" rx="3.5" ry="2.2" fill="none" stroke="#dd2a2a" stroke-width="1.2"/>
<polygon points="1168.5,380 1175,368 1187,369 1181,383" fill="none" stroke="#dd2a2a" stroke-width="1.3" />
<polyline points="1170,381 1185,369" fill="none" stroke="#dd2a2a" stroke-width="1.2" />
<polygon points="1191,379 1204,377 1205.6,385 1193,387" fill="none" stroke="#dd2a2a" stroke-width="1.3" />
<polyline points="1195,386 1204,379" fill="none" stroke="#dd2a2a" stroke-width="1.2" />
<polyline points="1038.5,339.8 1068,462" fill="none" stroke="#dd2a2a" stroke-width="1.6" />
<polygon points="1323,448.8 1366,440 1366,520.5 1350,518 1355,498 1342.8,478.5" fill="#fff" stroke="none" stroke-width="1" />
<polyline points="1325.5,458.7 1357.6,473.5" fill="none" stroke="#ece9b8" stroke-width="3" />
<g clip-path="url(#mc)"><path d="M1330 452 L1336 470 M1337 450 L1344 468 M1344 449 L1351 467 M1351 447 L1358 480 M1358 446 L1363 470 M1356 482 L1366 480 M1352 492 L1366 490 M1354 502 L1366 500 M1352 512 L1366 510" stroke="#cfcfcf" stroke-width="0.9"/></g>
<polygon points="1066.5,464.3 1149.5,454.3 1148.4,467.6 1144,473 1138.5,483 1126,513 1116,523 1103,516 1087.6,545 1063,532.9 1073,494" fill="url(#hatchB)" stroke="#dd2a2a" stroke-width="1.4" />
<polygon points="1146,486.4 1168.3,485.3 1170.5,494 1168.3,512 1155,580.4 1108.6,565" fill="#fff" stroke="none" stroke-width="1" />
<polygon points="1103,516.3 1116.3,523 1104,556 1088.7,545" fill="#fff" stroke="none" stroke-width="1" />
<polygon points="1168,575 1190,574 1191,588 1167,588" fill="#fff" stroke="none" stroke-width="1" />
<polygon points="1099,581 1141,596 1138,612 1094,595" fill="#fff" stroke="none" stroke-width="1" />
<polyline points="1097,588 1139,604" fill="none" stroke="#cfcfcf" stroke-width="0.9" />
<polygon points="1062,660 1112,681 1108,690 1059,670" fill="#fff" stroke="none" stroke-width="1" />
<polygon points="1152.8,445.5 1164,445.5 1172.7,467.6 1164,475.4 1155,474 1152.8,476.5 1108.6,565 1103,557 1148.4,472 1150,458" fill="#c9bdbf" stroke="none" stroke-width="1" />
<polygon points="1102.8,560 1084,597.5 1079,606.9 1056,653.7 1030,705 1016,728.7 1013.7,740 1056,740 1041.8,728.7 1030,721.7 1032.5,712.3 1060.6,658.4 1088.7,602 1093.4,595 1107.4,576.4 1111,569.4 1107.4,564.7" fill="#c9bdbf" stroke="#dd2a2a" stroke-width="1.3" />
<polyline points="1088.7,583.4 1105,569.4" fill="none" stroke="#dd2a2a" stroke-width="1.3" />
<polyline points="1075.8,614 1085,604.5" fill="none" stroke="#dd2a2a" stroke-width="1.3" />
<polyline points="1057,650 1068.8,639.7" fill="none" stroke="#dd2a2a" stroke-width="1.3" />
<polyline points="1039.5,686.5 1050,676" fill="none" stroke="#dd2a2a" stroke-width="1.3" />
<polyline points="1018.4,725 1034.8,710" fill="none" stroke="#dd2a2a" stroke-width="1.3" />
<polygon points="947,715.8 1030,729.9 1056,740 934,740" fill="url(#hatch)" stroke="#dd2a2a" stroke-width="1.2" />
<polyline points="1269,699.5 1342,673" fill="none" stroke="#c8bcbf" stroke-width="6" />
<polygon points="1191.5,696 1223,701.6 1227,738 1175.7,738" fill="#fff" stroke="none" stroke-width="1" />
<polygon points="519,506.7 581.3,545.6 564.8,576.8 502.6,537.8" fill="#cbdcc6" stroke="#22b0e2" stroke-width="2" />
<text x="449.5" y="478.9" font-size="11.5" font-weight="normal" fill="#222" textLength="13.2" lengthAdjust="spacingAndGlyphs"  stroke="#222" stroke-width="0.55">39</text>
<text x="616.9" y="489.3" font-size="11.5" font-weight="normal" fill="#222" textLength="7.4" lengthAdjust="spacingAndGlyphs"  stroke="#222" stroke-width="0.55">V</text>
<text x="486.6" y="583.5" font-size="11.5" font-weight="normal" fill="#222" textLength="10.4" lengthAdjust="spacingAndGlyphs"  stroke="#222" stroke-width="0.55">IV</text>
<text x="641.6" y="555.8" font-size="11.5" font-weight="normal" fill="#222" textLength="13.2" lengthAdjust="spacingAndGlyphs"  stroke="#222" stroke-width="0.55">40</text>
<text x="712" y="688" font-size="11.5" font-weight="normal" fill="#222" textLength="10.4" lengthAdjust="spacingAndGlyphs"  stroke="#222" stroke-width="0.55">IV</text>
<text x="724" y="399" font-size="11.5" font-weight="normal" fill="#222" textLength="13.2" lengthAdjust="spacingAndGlyphs"  stroke="#222" stroke-width="0.55">41</text>
<text x="997" y="412" font-size="11.5" font-weight="normal" fill="#222" textLength="13.2" lengthAdjust="spacingAndGlyphs"  stroke="#222" stroke-width="0.55">41</text>
<text x="948" y="269" font-size="11.5" font-weight="normal" fill="#222" textLength="7.4" lengthAdjust="spacingAndGlyphs"  stroke="#222" stroke-width="0.55">V</text>
<text x="927" y="553" font-size="11.5" font-weight="normal" fill="#222" textLength="7.4" lengthAdjust="spacingAndGlyphs"  stroke="#222" stroke-width="0.55">V</text>
<text x="904" y="610" font-size="11.5" font-weight="normal" fill="#222" textLength="13.2" lengthAdjust="spacingAndGlyphs"  stroke="#222" stroke-width="0.55">42</text>
<text x="954" y="702.6" font-size="11.5" font-weight="normal" fill="#222" textLength="13.2" lengthAdjust="spacingAndGlyphs"  stroke="#222" stroke-width="0.55">43</text>
<text x="1112" y="680" font-size="11.5" font-weight="normal" fill="#222" textLength="7.4" lengthAdjust="spacingAndGlyphs"  stroke="#222" stroke-width="0.55">V</text>
<text x="1323" y="551" font-size="11.5" font-weight="normal" fill="#222" textLength="12" lengthAdjust="spacingAndGlyphs"  stroke="#222" stroke-width="0.55">VI</text>
<text x="1235" y="574" font-size="11.5" font-weight="normal" fill="#222" textLength="7.4" lengthAdjust="spacingAndGlyphs"  stroke="#222" stroke-width="0.55">V</text>
<text x="1256" y="699" font-size="11.5" font-weight="normal" fill="#222" textLength="11" lengthAdjust="spacingAndGlyphs"  stroke="#222" stroke-width="0.55">III</text>
<text x="400.6" y="529.5" font-size="15.8" fill="#222" stroke="#222" stroke-width="0.3" letter-spacing="4.6">Камбура</text>
<text x="829" y="466.8" font-size="15.8" fill="#222" stroke="#222" stroke-width="0.3" letter-spacing="4.4">Ортатарла</text>
<text x="1090" y="693" font-size="12" fill="#222" stroke="#222" stroke-width="0.3" letter-spacing="3.6">КАРАКУШТЕПЕ</text>
<text x="1218" y="676" font-size="12.5" font-weight="normal" fill="#222" textLength="148" lengthAdjust="spacingAndGlyphs" stroke="#222" stroke-width="0.3">МИРОСЛАВОВИ ГРАДИН</text>
<text x="131" y="677.6" font-size="32" font-weight="bold" fill="#d2845f" fill-opacity="0.92" textLength="509" lengthAdjust="spacingAndGlyphs">СЕВЕРОИЗТОЧНИ ИМОТИ ЕООД</text>
<text x="1212.9" y="215.8" font-size="9.6" font-weight="normal" fill="#111" textLength="122.6" lengthAdjust="spacingAndGlyphs" >ККС 2005 4788750, 687163</text>
<defs><linearGradient id="shd" x1="0" y1="0" x2="0" y2="1"><stop offset="0" stop-color="#000" stop-opacity="0.07"/><stop offset="1" stop-color="#000" stop-opacity="0"/></linearGradient></defs><rect x="0" y="195" width="1366" height="8" fill="url(#shd)"/>
</g>
<rect x="8" y="708" width="193" height="22" fill="#fff" fill-opacity="0.9"/>
<path d="M11.5 711 V726.5 H198.5 V711" fill="none" stroke="#333" stroke-width="1"/>
<text x="91" y="723" font-size="10" font-weight="normal" fill="#222" textLength="28" lengthAdjust="spacingAndGlyphs" >500 m</text>
<rect x="388" y="708.5" width="593" height="22.5" fill="#fff" fill-opacity="0.85"/>
<text x="392" y="724.5" font-size="12.2" font-weight="normal" fill="#111" >Мащаб 1:</text>
<text x="452" y="724.5" font-size="12.2" font-weight="normal" fill="#111" >9494</text>
<text x="518" y="724.5" font-size="12.2" font-weight="normal" fill="#111" >X:</text>
<text x="537" y="724.5" font-size="12.2" font-weight="normal" fill="#111" >4788958</text>
<text x="603" y="724.5" font-size="12.2" font-weight="normal" fill="#111" >Y:</text>
<text x="620" y="724.5" font-size="12.2" font-weight="normal" fill="#111" >687176</text>
<text x="686" y="724.5" font-size="12.2" font-weight="normal" fill="#111" textLength="124" lengthAdjust="spacingAndGlyphs" >Координатна система:</text>
<text x="821" y="724.5" font-size="13.6" font-weight="bold" fill="#1b7a2e" textLength="64" lengthAdjust="spacingAndGlyphs" >ККС 2005</text>
<path d="M901 716 H910 L905.5 723 Z" fill="#1b7a2e"/>
<circle cx="945.5" cy="718" r="6" fill="none" stroke="#137a5c" stroke-width="2"/><path d="M949.8 722.3 L955 727.5" stroke="#137a5c" stroke-width="2.4"/>
<rect x="1187" y="706" width="173" height="24" fill="#0e8a5a"/>
<text x="1193" y="720" font-size="11" font-weight="normal" fill="#fff" >©</text>
<text x="1211" y="720.5" font-size="10.8" font-weight="bold" fill="#fff" textLength="74.6" lengthAdjust="spacingAndGlyphs" >OpenStreetMap</text>
<text x="1294.6" y="720.5" font-size="10.8" font-weight="bold" fill="#fff" textLength="61" lengthAdjust="spacingAndGlyphs" >contributors.</text>
<rect x="0" y="738" width="1366" height="30" fill="#1f2c37"/>
<path d="M9.9 746.8 L16.3 745.9 V751.6 H9.9 Z M17 745.8 L26.1 744.6 V751.6 H17 Z M9.9 752.4 H16.3 V758.4 L9.9 757.6 Z M17 752.4 H26.1 V761 L17 759.8 Z" fill="#fff"/>
<circle cx="56.4" cy="750.3" r="5.3" fill="none" stroke="#fff" stroke-width="1.2"/><path d="M52.6 754.4 L46.3 760.7" stroke="#fff" stroke-width="1.3"/>
<path d="M82 746 H92.5 M82 760 H92.5 M82.5 749 V756.8 M92 749 V756.8 M82.5 749.3 H92 M82.5 756.5 H92 M96.5 745.5 V748.5 M96.5 752.5 V760.5" fill="none" stroke="#fff" stroke-width="1.1"/><rect x="95" y="749" width="3" height="3" fill="#fff"/>
<path d="M121 747 H127 L129 748.5 H137.4 V759.4 H121 Z" fill="#f6d36c"/><rect x="121" y="749.5" width="16.4" height="9.9" fill="#fbe08d"/><path d="M125 759.4 V755.5 A4.2 3 0 0 1 133.4 755.5 V759.4 H131 V756.5 A2 1.5 0 0 0 127.4 756.5 V759.4 Z" fill="#3f86c4"/>
<defs><radialGradient id="ffg" cx="0.6" cy="0.3" r="0.8"><stop offset="0" stop-color="#ffbd4f"/><stop offset="0.5" stop-color="#ff7139"/><stop offset="1" stop-color="#e31587"/></radialGradient><linearGradient id="edg" x1="0" y1="0" x2="1" y2="1"><stop offset="0" stop-color="#2bc5e6"/><stop offset="0.5" stop-color="#1e8fd6"/><stop offset="1" stop-color="#0f5cb0"/></linearGradient></defs>
<circle cx="166" cy="753.3" r="8" fill="url(#ffg)"/><path d="M168 745.5 Q174.5 748 173.8 754 Q172 749.5 168.5 749 Z" fill="#ffd23a"/><circle cx="165.5" cy="754" r="3.6" fill="#7c3bb8"/>
<defs><linearGradient id="edg2" x1="0" y1="0" x2="1" y2="0.3"><stop offset="0" stop-color="#1fa3e0"/><stop offset="0.6" stop-color="#35c1a0"/><stop offset="1" stop-color="#7ad36b"/></linearGradient></defs>
<circle cx="202.9" cy="752.8" r="8" fill="#1b6fc2"/><path d="M195 752 A8 8 0 0 1 210.9 752.2 Q210.8 756.5 206.5 756.5 L201 756.5 Q198.5 756.5 199.2 753.8 Q200.5 749.5 204 749.8 Q199 747.5 195 752Z" fill="url(#edg2)"/><path d="M201 756.5 Q204 760.5 209 758.5 A8 8 0 0 1 195.5 756 Q197 759.5 201 756.5Z" fill="#1a5fa8"/>
<rect x="232.4" y="747.6" width="14.8" height="10.8" fill="#6ec2f0"/><rect x="233.6" y="748.8" width="12.4" height="8.4" fill="#c9e9fb"/><circle cx="237" cy="752" r="2.2" fill="#d6a94a"/><rect x="240.6" y="750" width="4" height="1.6" fill="#3d8bc9"/><rect x="240.6" y="753" width="4" height="1.6" fill="#3d8bc9"/>
<path d="M277.2 752.8 L270.27 748.8 A8 8 0 0 1 284.13 748.8 Z" fill="#db4437"/><path d="M277.2 752.8 L284.13 748.8 A8 8 0 0 1 277.2 760.8 Z" fill="#f4c20d"/><path d="M277.2 752.8 L277.2 760.8 A8 8 0 0 1 270.27 748.8 Z" fill="#0f9d58"/><circle cx="277.2" cy="752.8" r="3.9" fill="#fff"/><circle cx="277.2" cy="752.8" r="3" fill="#4285f4"/>
<rect x="296" y="738" width="160" height="30" fill="#46525c"/>
<rect x="296" y="766" width="160" height="2" fill="#80b9ee"/>
<circle cx="311.8" cy="753" r="7.5" fill="#7a1fbf"/><path d="M306.5 751.6 Q309 750 311.8 751.8 Q314.6 750 317 751.6 Q317.5 755 314.6 754.8 Q312.8 754.3 311.8 753.6 Q310.8 754.3 309 754.8 Q306 755 306.5 751.6Z" fill="#fff"/><circle cx="315.5" cy="757" r="2.6" fill="#e2543e"/>
<text x="324.6" y="756.9" font-size="11.8" font-weight="normal" fill="#fff" textLength="120.4" lengthAdjust="spacingAndGlyphs" >КАИС Портал — Mo...</text>
<rect x="1075" y="749" width="8" height="6" fill="#cfd8e3"/><rect x="1081" y="753" width="8" height="6" fill="#e6dcc2"/><rect x="1081" y="759" width="8" height="1.5" fill="#a89d7e"/>
<path d="M1103 747.5 Q1106.5 745.5 1110 747.5 M1103 760 Q1106.5 762 1110 760" fill="none" stroke="#fff" stroke-width="1"/><rect x="1101.5" y="750" width="8" height="7" rx="1.2" fill="none" stroke="#fff" stroke-width="1.1"/><path d="M1109.5 752 L1112.8 750.3 V756.7 L1109.5 755" fill="none" stroke="#fff" stroke-width="1"/>
<rect x="1125" y="745" width="11" height="11" fill="#5b7bb8"/><rect x="1126.3" y="746.3" width="8.4" height="8.4" fill="#9cb1d9"/><rect x="1123.8" y="757.8" width="13.4" height="1.3" fill="#3d6fd1"/>
<path d="M1154 745 Q1158 747 1161 746.8 V753 Q1161 758 1154 761.5 Q1147 758 1147 753 V746.8 Q1150 747 1154 745Z" fill="#fff"/><path d="M1154 745 V761.5 M1147 753 H1161" stroke="#1f2c37" stroke-width="1.2"/><circle cx="1158.6" cy="758" r="3.6" fill="#1aa94a"/><path d="M1156.8 758 L1158.2 759.4 L1160.6 756.7" fill="none" stroke="#fff" stroke-width="0.9"/>
<path d="M1170 753 H1173.5 M1171 750.5 V755.5 M1171 750.5 H1173 V755.5" fill="none" stroke="#fff" stroke-width="1.2"/><rect x="1174.5" y="749.5" width="10" height="7" fill="none" stroke="#fff" stroke-width="1.2"/><rect x="1176.5" y="751.5" width="6" height="3" fill="#fff"/><rect x="1185" y="751.5" width="1.5" height="3" fill="#fff"/>
<path d="M1197.5 760 A12 12 0 0 1 1209.5 748 M1200.5 760 A9 9 0 0 1 1209.5 751 M1203.5 760 A6 6 0 0 1 1209.5 754" fill="none" stroke="#fff" stroke-width="1"/><circle cx="1206.8" cy="758.6" r="1.4" fill="#fff"/>
<path d="M1219 750.5 H1222 L1225.5 747 V760 L1222 756.5 H1219 Z" fill="none" stroke="#fff" stroke-width="1.1"/><path d="M1227.5 750.5 Q1229 753.5 1227.5 756.5 M1229.8 748.5 Q1232.3 753.5 1229.8 758.5 M1232 746.5 Q1235.5 753.5 1232 760.5" fill="none" stroke="#fff" stroke-width="1"/>
<text x="1246" y="757.5" font-size="12" font-weight="normal" fill="#fff" textLength="19" lengthAdjust="spacingAndGlyphs" >БГР</text>
<text x="1281" y="757.5" font-size="12" font-weight="normal" fill="#fff" textLength="25.5" lengthAdjust="spacingAndGlyphs" >16:43</text>
<path d="M1324.5 745.5 H1340.5 V757.5 H1335 L1332.5 760.5 L1330 757.5 H1324.5 Z" fill="none" stroke="#fff" stroke-width="1.1" stroke-linejoin="round"/>
<path d="M262 84.5 Q268 86 267.5 90 Q267 94 262 96.5" fill="none" stroke="#fbfbfe" stroke-width="1.3"/>
<defs><radialGradient id="sun"><stop offset="0" stop-color="#e8d010"/><stop offset="0.55" stop-color="#eedc3a"/><stop offset="1" stop-color="#fefdea" stop-opacity="0"/></radialGradient></defs>
<rect x="135" y="77" width="130" height="52.5" fill="#fefdec"/>
<text x="141.5" y="89.8" font-size="11.8" font-weight="bold" fill="#bf4850" stroke="#bf4850" stroke-width="0.35" textLength="116" lengthAdjust="spacingAndGlyphs">СЕВЕРОИЗТОЧНИ ИМОТИ</text>
<circle cx="199.7" cy="97" r="4.8" fill="url(#sun)"/>
<path d="M146.5 116 L179.2 92.2 L216.8 115.6" fill="none" stroke="#2b2720" stroke-width="2.2" stroke-linejoin="miter"/>
<path d="M149.5 116.8 L179.2 95.2 L214 116.6" fill="none" stroke="#2b2720" stroke-width="0.9"/>
<rect x="160.7" y="98" width="5.2" height="6.7" fill="#2b2720"/>
<rect x="176" y="102" width="7" height="6.6" fill="none" stroke="#2b2720" stroke-width="1.2"/><path d="M179.5 102 V108.6 M176 105.3 H183" stroke="#2b2720" stroke-width="1"/>
<rect x="154.6" y="114" width="1.6" height="7.7" fill="#2b2720"/><rect x="157" y="114" width="1.8" height="7.7" fill="#2b2720"/>
<path d="M143 122.5 H159" stroke="#8a8a70" stroke-width="0.7"/>
<rect x="142.8" y="126.6" width="80.5" height="1.3" fill="#2b2720"/>
</svg>
</body></html>
